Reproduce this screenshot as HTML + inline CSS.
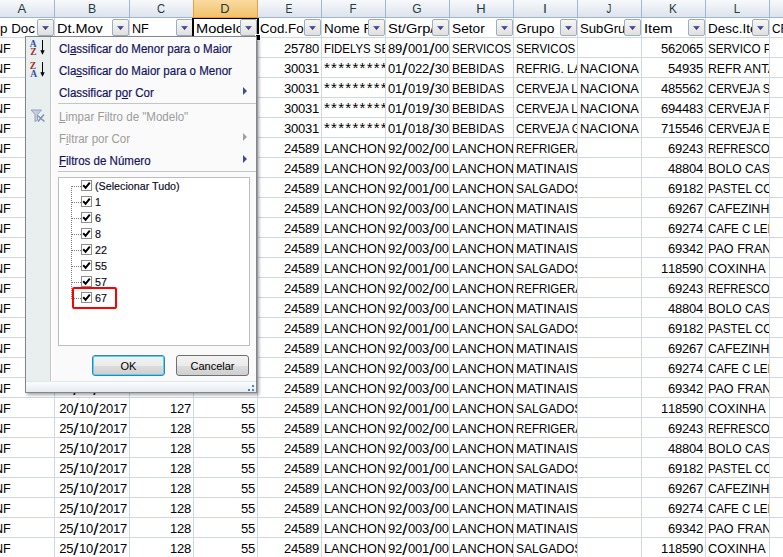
<!DOCTYPE html>
<html><head><meta charset="utf-8"><style>
*{margin:0;padding:0;box-sizing:border-box}
html,body{width:783px;height:557px;overflow:hidden;background:#fff;position:relative;font-family:"Liberation Sans",sans-serif}
.hdr{position:absolute;left:0;top:0;width:783px;height:17px;background:linear-gradient(#f7f9fc,#dde3ed)}
.hsel{position:absolute;top:0;height:17px;background:linear-gradient(#f9daa0,#f1c36a)}
.hsel-l{position:absolute;top:0;width:1px;height:17px;background:#f29b3c}
.hl{position:absolute;top:0px;width:40px;height:17px;text-align:center;font-size:13px;line-height:17px;color:#243c3c}
.hsep{position:absolute;top:0;width:1px;height:17px;background:#9fb7cf}
.hbot{position:absolute;left:0;top:17px;width:783px;height:1px;background:#9eb6ce}
.hbot-sel{position:absolute;top:17px;height:1px;background:#f29536}
.vgl{position:absolute;top:18px;width:1px;height:539px;background:#d0d7e5}
.hgl{position:absolute;left:0;width:783px;height:1px;background:#d0d7e5}
.cell{position:absolute;height:20px;overflow:hidden}
.cell span{position:absolute;top:2px;white-space:pre;font-size:13px;line-height:20px;color:#000}
.cell span.ch{text-align:center;transform-origin:50% 50%}
.cell span.ast{font-size:15px;letter-spacing:1.27px;top:1px}
.fbtn{position:absolute;top:19px;width:17px;height:17px;border:1px solid #98aecb;border-radius:2px;background:linear-gradient(#f7f6f2,#e1e0dc)}
.fbtn i{position:absolute;left:4px;top:6px;width:7px;height:4px;background:linear-gradient(#5867bd,#1f2150);clip-path:polygon(0 0,100% 0,50% 100%)}
.selbox{position:absolute;left:192px;top:18px;width:67px;height:18px;border:2px solid #000;border-top-width:1px;border-bottom-width:0}
.fillh{position:absolute;left:256px;top:35px;width:4px;height:5px;background:#000;outline:1px solid #fff}
.menu{position:absolute;left:25px;top:36px;width:232px;height:357px;border:1px solid #868686;background:#fafafa;box-shadow:2px 2px 3px rgba(0,0,0,0.35)}
.micon{position:absolute;left:0;top:0;width:24px;height:344px;background:#e9eeee}
.msep-v{position:absolute;left:24px;top:0;width:1px;height:344px;background:#c5c5c5;box-shadow:1px 0 0 #fff}
.mtxt{position:absolute;white-space:pre;font-size:12px;line-height:14px;transform:scaleX(0.96);transform-origin:0 0;-webkit-text-stroke:0.2px currentColor}
.mtxt.dis{-webkit-text-stroke:0}
.mtxt u{text-decoration:underline;text-underline-offset:1px}
.marr{position:absolute;width:0;height:0;border-top:4px solid transparent;border-bottom:4px solid transparent;border-left:4px solid #4a5a8a}
.msep{position:absolute;width:198px;height:1px;background:#c5c5c5}
.ico{position:absolute}
.lbox{position:absolute;border:1px solid #bdbdbd;background:#fff;overflow:hidden}
.cb{position:absolute;width:11px;height:11px;border:1px solid #8e8e8e;background:#fff}
.cb svg{position:absolute;left:0;top:0}
.ltxt{position:absolute;white-space:pre;font-size:11px;line-height:13px;color:#0a0a20;-webkit-text-stroke:0.15px currentColor;transform:scaleX(0.975);transform-origin:0 0}
.dh{position:absolute;width:9px;height:1px;background:repeating-linear-gradient(90deg,#808080 0 1px,transparent 1px 2px)}
.dv{position:absolute;width:1px;background:repeating-linear-gradient(180deg,#808080 0 1px,transparent 1px 2px)}
.redbox{position:absolute;width:45px;height:22px;border:2px solid #ff0000;border-radius:2px}
.btn{position:absolute;width:73px;height:21px;border:1px solid #707070;border-radius:3px;background:linear-gradient(#f2f2f2 0,#ebebeb 50%,#dddddd 51%,#cfcfcf 100%);text-align:center;font-size:11px;line-height:21px;color:#000}
.btn.ok{border-color:#3c7fb1;box-shadow:inset 0 0 0 1px #48d8fb}
.mfoot{position:absolute;left:0;width:230px;height:11px;border-top:1px solid #dde7ee;background:linear-gradient(#fdfdfe,#e3ebf2)}
.mfoot i{position:absolute;width:2px;height:2px;background:#5a7eb8}
</style></head><body>
<div class="hdr"></div>
<div class="hl" style="left:2.0px;transform:scaleX(1.008)">A</div>
<div class="hl" style="left:71.5px;transform:scaleX(0.947)">B</div>
<div class="hl" style="left:141.0px;transform:scaleX(0.857)">C</div>
<div class="hsel" style="left:193px;width:64px"></div>
<div class="hl" style="left:205.0px;transform:scaleX(0.989)">D</div>
<div class="hl" style="left:269.0px;transform:scaleX(0.792)">E</div>
<div class="hl" style="left:333.0px;transform:scaleX(0.884)">F</div>
<div class="hl" style="left:397.0px;transform:scaleX(0.926)">G</div>
<div class="hl" style="left:461.0px;transform:scaleX(1.002)">H</div>
<div class="hl" style="left:525.0px;transform:scaleX(1.087)">I</div>
<div class="hl" style="left:589.0px;transform:scaleX(0.741)">J</div>
<div class="hl" style="left:653.0px;transform:scaleX(0.906)">K</div>
<div class="hl" style="left:717.0px;transform:scaleX(0.877)">L</div>
<div class="hl" style="left:789.5px;transform:scaleX(1.192)">M</div>
<div class="hsep" style="left:54px"></div>
<div class="hsep" style="left:129px"></div>
<div class="hsep" style="left:193px"></div>
<div class="hsep" style="left:257px"></div>
<div class="hsep" style="left:321px"></div>
<div class="hsep" style="left:385px"></div>
<div class="hsep" style="left:449px"></div>
<div class="hsep" style="left:513px"></div>
<div class="hsep" style="left:577px"></div>
<div class="hsep" style="left:641px"></div>
<div class="hsep" style="left:705px"></div>
<div class="hsep" style="left:769px"></div>
<div class="hsel-l" style="left:193px"></div>
<div class="hbot"></div>
<div class="hbot-sel" style="left:193px;width:65px"></div>
<div class="hsel-l" style="left:257px"></div>
<div class="vgl" style="left:54px"></div>
<div class="vgl" style="left:129px"></div>
<div class="vgl" style="left:193px"></div>
<div class="vgl" style="left:257px"></div>
<div class="vgl" style="left:321px"></div>
<div class="vgl" style="left:385px"></div>
<div class="vgl" style="left:449px"></div>
<div class="vgl" style="left:513px"></div>
<div class="vgl" style="left:577px"></div>
<div class="vgl" style="left:641px"></div>
<div class="vgl" style="left:705px"></div>
<div class="vgl" style="left:769px"></div>
<div class="hgl" style="top:37px"></div>
<div class="hgl" style="top:57px"></div>
<div class="hgl" style="top:77px"></div>
<div class="hgl" style="top:97px"></div>
<div class="hgl" style="top:117px"></div>
<div class="hgl" style="top:137px"></div>
<div class="hgl" style="top:157px"></div>
<div class="hgl" style="top:177px"></div>
<div class="hgl" style="top:197px"></div>
<div class="hgl" style="top:217px"></div>
<div class="hgl" style="top:237px"></div>
<div class="hgl" style="top:257px"></div>
<div class="hgl" style="top:277px"></div>
<div class="hgl" style="top:297px"></div>
<div class="hgl" style="top:317px"></div>
<div class="hgl" style="top:337px"></div>
<div class="hgl" style="top:357px"></div>
<div class="hgl" style="top:377px"></div>
<div class="hgl" style="top:397px"></div>
<div class="hgl" style="top:417px"></div>
<div class="hgl" style="top:437px"></div>
<div class="hgl" style="top:457px"></div>
<div class="hgl" style="top:477px"></div>
<div class="hgl" style="top:497px"></div>
<div class="hgl" style="top:517px"></div>
<div class="hgl" style="top:537px"></div>
<div class="cell" style="left:0px;top:17px;width:37px"><span style="left:0px;transform:scaleX(1.030);transform-origin:0 0">p Doc</span></div>
<div class="cell" style="left:55px;top:17px;width:57px"><span style="left:2px;transform:scaleX(1.114);transform-origin:0 0">Dt.Mov</span></div>
<div class="cell" style="left:130px;top:17px;width:46px"><span style="left:2px;transform:scaleX(0.968);transform-origin:0 0">NF</span></div>
<div class="cell" style="left:194px;top:17px;width:46px"><span style="left:2px;transform:scaleX(1.120);transform-origin:0 0">Modelo</span></div>
<div class="cell" style="left:258px;top:17px;width:46px"><span style="left:2px;transform:scaleX(1.022);transform-origin:0 0">Cod.Forn</span></div>
<div class="cell" style="left:322px;top:17px;width:46px"><span style="left:2px;transform:scaleX(1.032);transform-origin:0 0">Nome Forn</span></div>
<div class="cell" style="left:386px;top:17px;width:46px"><span style="left:2px;transform:scaleX(1.126);transform-origin:0 0">St/Grp/SubGrp</span></div>
<div class="cell" style="left:450px;top:17px;width:46px"><span style="left:2px;transform:scaleX(1.054);transform-origin:0 0">Setor</span></div>
<div class="cell" style="left:514px;top:17px;width:46px"><span style="left:2px;transform:scaleX(1.064);transform-origin:0 0">Grupo</span></div>
<div class="cell" style="left:578px;top:17px;width:46px"><span style="left:2px;transform:scaleX(1.012);transform-origin:0 0">SubGrupo</span></div>
<div class="cell" style="left:642px;top:17px;width:46px"><span style="left:2px;transform:scaleX(1.130);transform-origin:0 0">Item</span></div>
<div class="cell" style="left:706px;top:17px;width:46px"><span style="left:2px;transform:scaleX(1.036);transform-origin:0 0">Desc.Item</span></div>
<div class="cell" style="left:770px;top:17px;width:63px"><span style="left:2px;transform:scaleX(0.910);transform-origin:0 0">CFOP</span></div>
<div class="cell" style="left:-9px;top:37px;width:63px"><span style="left:3px;transform:scaleX(0.968);transform-origin:0 0">NF</span></div>
<div class="cell" style="left:258px;top:37px;width:63px"><span class="ch" style="left:26.00px;width:7.0px;transform:scaleX(1)">2</span><span class="ch" style="left:33.00px;width:7.0px;transform:scaleX(1)">5</span><span class="ch" style="left:40.00px;width:7.0px;transform:scaleX(1)">7</span><span class="ch" style="left:47.00px;width:7.0px;transform:scaleX(1)">8</span><span class="ch" style="left:54.00px;width:7.0px;transform:scaleX(1)">0</span></div>
<div class="cell" style="left:322px;top:37px;width:63px"><span style="left:2px;transform:scaleX(0.876);transform-origin:0 0">FIDELYS SERVICOS</span></div>
<div class="cell" style="left:386px;top:37px;width:63px"><span class="ch" style="left:2.00px;width:7.0px;transform:scaleX(1)">8</span><span class="ch" style="left:9.00px;width:7.0px;transform:scaleX(1)">9</span><span class="ch" style="left:16.00px;width:5.9px;transform:translateY(0.5px) scale(1.45,1.3)">/</span><span class="ch" style="left:21.90px;width:7.0px;transform:scaleX(1)">0</span><span class="ch" style="left:28.90px;width:7.0px;transform:scaleX(1)">0</span><span class="ch" style="left:35.90px;width:7.0px;transform:scaleX(1)">1</span><span class="ch" style="left:42.90px;width:5.9px;transform:translateY(0.5px) scale(1.45,1.3)">/</span><span class="ch" style="left:48.80px;width:7.0px;transform:scaleX(1)">0</span><span class="ch" style="left:55.80px;width:7.0px;transform:scaleX(1)">0</span><span class="ch" style="left:62.80px;width:7.0px;transform:scaleX(1)">0</span><span class="ch" style="left:69.80px;width:7.0px;transform:scaleX(1)">1</span></div>
<div class="cell" style="left:450px;top:37px;width:63px"><span style="left:2px;transform:scaleX(0.885);transform-origin:0 0">SERVICOS</span></div>
<div class="cell" style="left:514px;top:37px;width:63px"><span style="left:2px;transform:scaleX(0.885);transform-origin:0 0">SERVICOS</span></div>
<div class="cell" style="left:642px;top:37px;width:63px"><span class="ch" style="left:19.00px;width:7.0px;transform:scaleX(1)">5</span><span class="ch" style="left:26.00px;width:7.0px;transform:scaleX(1)">6</span><span class="ch" style="left:33.00px;width:7.0px;transform:scaleX(1)">2</span><span class="ch" style="left:40.00px;width:7.0px;transform:scaleX(1)">0</span><span class="ch" style="left:47.00px;width:7.0px;transform:scaleX(1)">6</span><span class="ch" style="left:54.00px;width:7.0px;transform:scaleX(1)">5</span></div>
<div class="cell" style="left:706px;top:37px;width:63px"><span style="left:2px;transform:scaleX(0.901);transform-origin:0 0">SERVICO PRESTADO</span></div>
<div class="cell" style="left:-9px;top:57px;width:63px"><span style="left:3px;transform:scaleX(0.968);transform-origin:0 0">NF</span></div>
<div class="cell" style="left:258px;top:57px;width:63px"><span class="ch" style="left:26.00px;width:7.0px;transform:scaleX(1)">3</span><span class="ch" style="left:33.00px;width:7.0px;transform:scaleX(1)">0</span><span class="ch" style="left:40.00px;width:7.0px;transform:scaleX(1)">0</span><span class="ch" style="left:47.00px;width:7.0px;transform:scaleX(1)">3</span><span class="ch" style="left:54.00px;width:7.0px;transform:scaleX(1)">1</span></div>
<div class="cell" style="left:322px;top:57px;width:63px"><span class="ast" style="left:2px">**********</span></div>
<div class="cell" style="left:386px;top:57px;width:63px"><span class="ch" style="left:2.00px;width:7.0px;transform:scaleX(1)">0</span><span class="ch" style="left:9.00px;width:7.0px;transform:scaleX(1)">1</span><span class="ch" style="left:16.00px;width:5.9px;transform:translateY(0.5px) scale(1.45,1.3)">/</span><span class="ch" style="left:21.90px;width:7.0px;transform:scaleX(1)">0</span><span class="ch" style="left:28.90px;width:7.0px;transform:scaleX(1)">2</span><span class="ch" style="left:35.90px;width:7.0px;transform:scaleX(1)">2</span><span class="ch" style="left:42.90px;width:5.9px;transform:translateY(0.5px) scale(1.45,1.3)">/</span><span class="ch" style="left:48.80px;width:7.0px;transform:scaleX(1)">3</span><span class="ch" style="left:55.80px;width:7.0px;transform:scaleX(1)">0</span><span class="ch" style="left:62.80px;width:7.0px;transform:scaleX(1)">0</span><span class="ch" style="left:69.80px;width:7.0px;transform:scaleX(1)">1</span></div>
<div class="cell" style="left:450px;top:57px;width:63px"><span style="left:2px;transform:scaleX(0.926);transform-origin:0 0">BEBIDAS</span></div>
<div class="cell" style="left:514px;top:57px;width:63px"><span style="left:2px;transform:scaleX(0.907);transform-origin:0 0">REFRIG. LATA</span></div>
<div class="cell" style="left:578px;top:57px;width:63px"><span style="left:2px;transform:scaleX(0.996);transform-origin:0 0">NACIONA</span></div>
<div class="cell" style="left:642px;top:57px;width:63px"><span class="ch" style="left:26.00px;width:7.0px;transform:scaleX(1)">5</span><span class="ch" style="left:33.00px;width:7.0px;transform:scaleX(1)">4</span><span class="ch" style="left:40.00px;width:7.0px;transform:scaleX(1)">9</span><span class="ch" style="left:47.00px;width:7.0px;transform:scaleX(1)">3</span><span class="ch" style="left:54.00px;width:7.0px;transform:scaleX(1)">5</span></div>
<div class="cell" style="left:706px;top:57px;width:63px"><span style="left:2px;transform:scaleX(0.943);transform-origin:0 0">REFR ANTARCTICA</span></div>
<div class="cell" style="left:-9px;top:77px;width:63px"><span style="left:3px;transform:scaleX(0.968);transform-origin:0 0">NF</span></div>
<div class="cell" style="left:258px;top:77px;width:63px"><span class="ch" style="left:26.00px;width:7.0px;transform:scaleX(1)">3</span><span class="ch" style="left:33.00px;width:7.0px;transform:scaleX(1)">0</span><span class="ch" style="left:40.00px;width:7.0px;transform:scaleX(1)">0</span><span class="ch" style="left:47.00px;width:7.0px;transform:scaleX(1)">3</span><span class="ch" style="left:54.00px;width:7.0px;transform:scaleX(1)">1</span></div>
<div class="cell" style="left:322px;top:77px;width:63px"><span class="ast" style="left:2px">**********</span></div>
<div class="cell" style="left:386px;top:77px;width:63px"><span class="ch" style="left:2.00px;width:7.0px;transform:scaleX(1)">0</span><span class="ch" style="left:9.00px;width:7.0px;transform:scaleX(1)">1</span><span class="ch" style="left:16.00px;width:5.9px;transform:translateY(0.5px) scale(1.45,1.3)">/</span><span class="ch" style="left:21.90px;width:7.0px;transform:scaleX(1)">0</span><span class="ch" style="left:28.90px;width:7.0px;transform:scaleX(1)">1</span><span class="ch" style="left:35.90px;width:7.0px;transform:scaleX(1)">9</span><span class="ch" style="left:42.90px;width:5.9px;transform:translateY(0.5px) scale(1.45,1.3)">/</span><span class="ch" style="left:48.80px;width:7.0px;transform:scaleX(1)">3</span><span class="ch" style="left:55.80px;width:7.0px;transform:scaleX(1)">0</span><span class="ch" style="left:62.80px;width:7.0px;transform:scaleX(1)">0</span><span class="ch" style="left:69.80px;width:7.0px;transform:scaleX(1)">1</span></div>
<div class="cell" style="left:450px;top:77px;width:63px"><span style="left:2px;transform:scaleX(0.926);transform-origin:0 0">BEBIDAS</span></div>
<div class="cell" style="left:514px;top:77px;width:63px"><span style="left:2px;transform:scaleX(0.883);transform-origin:0 0">CERVEJA LATA</span></div>
<div class="cell" style="left:578px;top:77px;width:63px"><span style="left:2px;transform:scaleX(0.996);transform-origin:0 0">NACIONA</span></div>
<div class="cell" style="left:642px;top:77px;width:63px"><span class="ch" style="left:19.00px;width:7.0px;transform:scaleX(1)">4</span><span class="ch" style="left:26.00px;width:7.0px;transform:scaleX(1)">8</span><span class="ch" style="left:33.00px;width:7.0px;transform:scaleX(1)">5</span><span class="ch" style="left:40.00px;width:7.0px;transform:scaleX(1)">5</span><span class="ch" style="left:47.00px;width:7.0px;transform:scaleX(1)">6</span><span class="ch" style="left:54.00px;width:7.0px;transform:scaleX(1)">2</span></div>
<div class="cell" style="left:706px;top:77px;width:63px"><span style="left:2px;transform:scaleX(0.873);transform-origin:0 0">CERVEJA SKOL</span></div>
<div class="cell" style="left:-9px;top:97px;width:63px"><span style="left:3px;transform:scaleX(0.968);transform-origin:0 0">NF</span></div>
<div class="cell" style="left:258px;top:97px;width:63px"><span class="ch" style="left:26.00px;width:7.0px;transform:scaleX(1)">3</span><span class="ch" style="left:33.00px;width:7.0px;transform:scaleX(1)">0</span><span class="ch" style="left:40.00px;width:7.0px;transform:scaleX(1)">0</span><span class="ch" style="left:47.00px;width:7.0px;transform:scaleX(1)">3</span><span class="ch" style="left:54.00px;width:7.0px;transform:scaleX(1)">1</span></div>
<div class="cell" style="left:322px;top:97px;width:63px"><span class="ast" style="left:2px">**********</span></div>
<div class="cell" style="left:386px;top:97px;width:63px"><span class="ch" style="left:2.00px;width:7.0px;transform:scaleX(1)">0</span><span class="ch" style="left:9.00px;width:7.0px;transform:scaleX(1)">1</span><span class="ch" style="left:16.00px;width:5.9px;transform:translateY(0.5px) scale(1.45,1.3)">/</span><span class="ch" style="left:21.90px;width:7.0px;transform:scaleX(1)">0</span><span class="ch" style="left:28.90px;width:7.0px;transform:scaleX(1)">1</span><span class="ch" style="left:35.90px;width:7.0px;transform:scaleX(1)">9</span><span class="ch" style="left:42.90px;width:5.9px;transform:translateY(0.5px) scale(1.45,1.3)">/</span><span class="ch" style="left:48.80px;width:7.0px;transform:scaleX(1)">3</span><span class="ch" style="left:55.80px;width:7.0px;transform:scaleX(1)">0</span><span class="ch" style="left:62.80px;width:7.0px;transform:scaleX(1)">0</span><span class="ch" style="left:69.80px;width:7.0px;transform:scaleX(1)">1</span></div>
<div class="cell" style="left:450px;top:97px;width:63px"><span style="left:2px;transform:scaleX(0.926);transform-origin:0 0">BEBIDAS</span></div>
<div class="cell" style="left:514px;top:97px;width:63px"><span style="left:2px;transform:scaleX(0.883);transform-origin:0 0">CERVEJA LATA</span></div>
<div class="cell" style="left:578px;top:97px;width:63px"><span style="left:2px;transform:scaleX(0.996);transform-origin:0 0">NACIONA</span></div>
<div class="cell" style="left:642px;top:97px;width:63px"><span class="ch" style="left:19.00px;width:7.0px;transform:scaleX(1)">6</span><span class="ch" style="left:26.00px;width:7.0px;transform:scaleX(1)">9</span><span class="ch" style="left:33.00px;width:7.0px;transform:scaleX(1)">4</span><span class="ch" style="left:40.00px;width:7.0px;transform:scaleX(1)">4</span><span class="ch" style="left:47.00px;width:7.0px;transform:scaleX(1)">8</span><span class="ch" style="left:54.00px;width:7.0px;transform:scaleX(1)">3</span></div>
<div class="cell" style="left:706px;top:97px;width:63px"><span style="left:2px;transform:scaleX(0.884);transform-origin:0 0">CERVEJA FEST</span></div>
<div class="cell" style="left:-9px;top:117px;width:63px"><span style="left:3px;transform:scaleX(0.968);transform-origin:0 0">NF</span></div>
<div class="cell" style="left:258px;top:117px;width:63px"><span class="ch" style="left:26.00px;width:7.0px;transform:scaleX(1)">3</span><span class="ch" style="left:33.00px;width:7.0px;transform:scaleX(1)">0</span><span class="ch" style="left:40.00px;width:7.0px;transform:scaleX(1)">0</span><span class="ch" style="left:47.00px;width:7.0px;transform:scaleX(1)">3</span><span class="ch" style="left:54.00px;width:7.0px;transform:scaleX(1)">1</span></div>
<div class="cell" style="left:322px;top:117px;width:63px"><span class="ast" style="left:2px">**********</span></div>
<div class="cell" style="left:386px;top:117px;width:63px"><span class="ch" style="left:2.00px;width:7.0px;transform:scaleX(1)">0</span><span class="ch" style="left:9.00px;width:7.0px;transform:scaleX(1)">1</span><span class="ch" style="left:16.00px;width:5.9px;transform:translateY(0.5px) scale(1.45,1.3)">/</span><span class="ch" style="left:21.90px;width:7.0px;transform:scaleX(1)">0</span><span class="ch" style="left:28.90px;width:7.0px;transform:scaleX(1)">1</span><span class="ch" style="left:35.90px;width:7.0px;transform:scaleX(1)">8</span><span class="ch" style="left:42.90px;width:5.9px;transform:translateY(0.5px) scale(1.45,1.3)">/</span><span class="ch" style="left:48.80px;width:7.0px;transform:scaleX(1)">3</span><span class="ch" style="left:55.80px;width:7.0px;transform:scaleX(1)">0</span><span class="ch" style="left:62.80px;width:7.0px;transform:scaleX(1)">0</span><span class="ch" style="left:69.80px;width:7.0px;transform:scaleX(1)">1</span></div>
<div class="cell" style="left:450px;top:117px;width:63px"><span style="left:2px;transform:scaleX(0.926);transform-origin:0 0">BEBIDAS</span></div>
<div class="cell" style="left:514px;top:117px;width:63px"><span style="left:2px;transform:scaleX(0.889);transform-origin:0 0">CERVEJA GARRAFA</span></div>
<div class="cell" style="left:578px;top:117px;width:63px"><span style="left:2px;transform:scaleX(0.996);transform-origin:0 0">NACIONA</span></div>
<div class="cell" style="left:642px;top:117px;width:63px"><span class="ch" style="left:19.00px;width:7.0px;transform:scaleX(1)">7</span><span class="ch" style="left:26.00px;width:7.0px;transform:scaleX(1)">1</span><span class="ch" style="left:33.00px;width:7.0px;transform:scaleX(1)">5</span><span class="ch" style="left:40.00px;width:7.0px;transform:scaleX(1)">5</span><span class="ch" style="left:47.00px;width:7.0px;transform:scaleX(1)">4</span><span class="ch" style="left:54.00px;width:7.0px;transform:scaleX(1)">6</span></div>
<div class="cell" style="left:706px;top:117px;width:63px"><span style="left:2px;transform:scaleX(0.872);transform-origin:0 0">CERVEJA EISEN</span></div>
<div class="cell" style="left:-9px;top:137px;width:63px"><span style="left:3px;transform:scaleX(0.968);transform-origin:0 0">NF</span></div>
<div class="cell" style="left:258px;top:137px;width:63px"><span class="ch" style="left:26.00px;width:7.0px;transform:scaleX(1)">2</span><span class="ch" style="left:33.00px;width:7.0px;transform:scaleX(1)">4</span><span class="ch" style="left:40.00px;width:7.0px;transform:scaleX(1)">5</span><span class="ch" style="left:47.00px;width:7.0px;transform:scaleX(1)">8</span><span class="ch" style="left:54.00px;width:7.0px;transform:scaleX(1)">9</span></div>
<div class="cell" style="left:322px;top:137px;width:63px"><span style="left:2px;transform:scaleX(0.976);transform-origin:0 0">LANCHONETE</span></div>
<div class="cell" style="left:386px;top:137px;width:63px"><span class="ch" style="left:2.00px;width:7.0px;transform:scaleX(1)">9</span><span class="ch" style="left:9.00px;width:7.0px;transform:scaleX(1)">2</span><span class="ch" style="left:16.00px;width:5.9px;transform:translateY(0.5px) scale(1.45,1.3)">/</span><span class="ch" style="left:21.90px;width:7.0px;transform:scaleX(1)">0</span><span class="ch" style="left:28.90px;width:7.0px;transform:scaleX(1)">0</span><span class="ch" style="left:35.90px;width:7.0px;transform:scaleX(1)">2</span><span class="ch" style="left:42.90px;width:5.9px;transform:translateY(0.5px) scale(1.45,1.3)">/</span><span class="ch" style="left:48.80px;width:7.0px;transform:scaleX(1)">0</span><span class="ch" style="left:55.80px;width:7.0px;transform:scaleX(1)">0</span><span class="ch" style="left:62.80px;width:7.0px;transform:scaleX(1)">0</span><span class="ch" style="left:69.80px;width:7.0px;transform:scaleX(1)">1</span></div>
<div class="cell" style="left:450px;top:137px;width:63px"><span style="left:2px;transform:scaleX(0.976);transform-origin:0 0">LANCHONETE</span></div>
<div class="cell" style="left:514px;top:137px;width:63px"><span style="left:2px;transform:scaleX(0.881);transform-origin:0 0">REFRIGERANTES</span></div>
<div class="cell" style="left:642px;top:137px;width:63px"><span class="ch" style="left:26.00px;width:7.0px;transform:scaleX(1)">6</span><span class="ch" style="left:33.00px;width:7.0px;transform:scaleX(1)">9</span><span class="ch" style="left:40.00px;width:7.0px;transform:scaleX(1)">2</span><span class="ch" style="left:47.00px;width:7.0px;transform:scaleX(1)">4</span><span class="ch" style="left:54.00px;width:7.0px;transform:scaleX(1)">3</span></div>
<div class="cell" style="left:706px;top:137px;width:63px"><span style="left:2px;transform:scaleX(0.855);transform-origin:0 0">REFRESCO</span></div>
<div class="cell" style="left:-9px;top:157px;width:63px"><span style="left:3px;transform:scaleX(0.968);transform-origin:0 0">NF</span></div>
<div class="cell" style="left:258px;top:157px;width:63px"><span class="ch" style="left:26.00px;width:7.0px;transform:scaleX(1)">2</span><span class="ch" style="left:33.00px;width:7.0px;transform:scaleX(1)">4</span><span class="ch" style="left:40.00px;width:7.0px;transform:scaleX(1)">5</span><span class="ch" style="left:47.00px;width:7.0px;transform:scaleX(1)">8</span><span class="ch" style="left:54.00px;width:7.0px;transform:scaleX(1)">9</span></div>
<div class="cell" style="left:322px;top:157px;width:63px"><span style="left:2px;transform:scaleX(0.976);transform-origin:0 0">LANCHONETE</span></div>
<div class="cell" style="left:386px;top:157px;width:63px"><span class="ch" style="left:2.00px;width:7.0px;transform:scaleX(1)">9</span><span class="ch" style="left:9.00px;width:7.0px;transform:scaleX(1)">2</span><span class="ch" style="left:16.00px;width:5.9px;transform:translateY(0.5px) scale(1.45,1.3)">/</span><span class="ch" style="left:21.90px;width:7.0px;transform:scaleX(1)">0</span><span class="ch" style="left:28.90px;width:7.0px;transform:scaleX(1)">0</span><span class="ch" style="left:35.90px;width:7.0px;transform:scaleX(1)">3</span><span class="ch" style="left:42.90px;width:5.9px;transform:translateY(0.5px) scale(1.45,1.3)">/</span><span class="ch" style="left:48.80px;width:7.0px;transform:scaleX(1)">0</span><span class="ch" style="left:55.80px;width:7.0px;transform:scaleX(1)">0</span><span class="ch" style="left:62.80px;width:7.0px;transform:scaleX(1)">0</span><span class="ch" style="left:69.80px;width:7.0px;transform:scaleX(1)">1</span></div>
<div class="cell" style="left:450px;top:157px;width:63px"><span style="left:2px;transform:scaleX(0.976);transform-origin:0 0">LANCHONETE</span></div>
<div class="cell" style="left:514px;top:157px;width:63px"><span style="left:2px;transform:scaleX(1.031);transform-origin:0 0">MATINAIS</span></div>
<div class="cell" style="left:642px;top:157px;width:63px"><span class="ch" style="left:26.00px;width:7.0px;transform:scaleX(1)">4</span><span class="ch" style="left:33.00px;width:7.0px;transform:scaleX(1)">8</span><span class="ch" style="left:40.00px;width:7.0px;transform:scaleX(1)">8</span><span class="ch" style="left:47.00px;width:7.0px;transform:scaleX(1)">0</span><span class="ch" style="left:54.00px;width:7.0px;transform:scaleX(1)">4</span></div>
<div class="cell" style="left:706px;top:157px;width:63px"><span style="left:2px;transform:scaleX(0.928);transform-origin:0 0">BOLO CASEIRO</span></div>
<div class="cell" style="left:-9px;top:177px;width:63px"><span style="left:3px;transform:scaleX(0.968);transform-origin:0 0">NF</span></div>
<div class="cell" style="left:258px;top:177px;width:63px"><span class="ch" style="left:26.00px;width:7.0px;transform:scaleX(1)">2</span><span class="ch" style="left:33.00px;width:7.0px;transform:scaleX(1)">4</span><span class="ch" style="left:40.00px;width:7.0px;transform:scaleX(1)">5</span><span class="ch" style="left:47.00px;width:7.0px;transform:scaleX(1)">8</span><span class="ch" style="left:54.00px;width:7.0px;transform:scaleX(1)">9</span></div>
<div class="cell" style="left:322px;top:177px;width:63px"><span style="left:2px;transform:scaleX(0.976);transform-origin:0 0">LANCHONETE</span></div>
<div class="cell" style="left:386px;top:177px;width:63px"><span class="ch" style="left:2.00px;width:7.0px;transform:scaleX(1)">9</span><span class="ch" style="left:9.00px;width:7.0px;transform:scaleX(1)">2</span><span class="ch" style="left:16.00px;width:5.9px;transform:translateY(0.5px) scale(1.45,1.3)">/</span><span class="ch" style="left:21.90px;width:7.0px;transform:scaleX(1)">0</span><span class="ch" style="left:28.90px;width:7.0px;transform:scaleX(1)">0</span><span class="ch" style="left:35.90px;width:7.0px;transform:scaleX(1)">1</span><span class="ch" style="left:42.90px;width:5.9px;transform:translateY(0.5px) scale(1.45,1.3)">/</span><span class="ch" style="left:48.80px;width:7.0px;transform:scaleX(1)">0</span><span class="ch" style="left:55.80px;width:7.0px;transform:scaleX(1)">0</span><span class="ch" style="left:62.80px;width:7.0px;transform:scaleX(1)">0</span><span class="ch" style="left:69.80px;width:7.0px;transform:scaleX(1)">1</span></div>
<div class="cell" style="left:450px;top:177px;width:63px"><span style="left:2px;transform:scaleX(0.976);transform-origin:0 0">LANCHONETE</span></div>
<div class="cell" style="left:514px;top:177px;width:63px"><span style="left:2px;transform:scaleX(0.927);transform-origin:0 0">SALGADOS</span></div>
<div class="cell" style="left:642px;top:177px;width:63px"><span class="ch" style="left:26.00px;width:7.0px;transform:scaleX(1)">6</span><span class="ch" style="left:33.00px;width:7.0px;transform:scaleX(1)">9</span><span class="ch" style="left:40.00px;width:7.0px;transform:scaleX(1)">1</span><span class="ch" style="left:47.00px;width:7.0px;transform:scaleX(1)">8</span><span class="ch" style="left:54.00px;width:7.0px;transform:scaleX(1)">2</span></div>
<div class="cell" style="left:706px;top:177px;width:63px"><span style="left:2px;transform:scaleX(0.898);transform-origin:0 0">PASTEL CC</span></div>
<div class="cell" style="left:-9px;top:197px;width:63px"><span style="left:3px;transform:scaleX(0.968);transform-origin:0 0">NF</span></div>
<div class="cell" style="left:258px;top:197px;width:63px"><span class="ch" style="left:26.00px;width:7.0px;transform:scaleX(1)">2</span><span class="ch" style="left:33.00px;width:7.0px;transform:scaleX(1)">4</span><span class="ch" style="left:40.00px;width:7.0px;transform:scaleX(1)">5</span><span class="ch" style="left:47.00px;width:7.0px;transform:scaleX(1)">8</span><span class="ch" style="left:54.00px;width:7.0px;transform:scaleX(1)">9</span></div>
<div class="cell" style="left:322px;top:197px;width:63px"><span style="left:2px;transform:scaleX(0.976);transform-origin:0 0">LANCHONETE</span></div>
<div class="cell" style="left:386px;top:197px;width:63px"><span class="ch" style="left:2.00px;width:7.0px;transform:scaleX(1)">9</span><span class="ch" style="left:9.00px;width:7.0px;transform:scaleX(1)">2</span><span class="ch" style="left:16.00px;width:5.9px;transform:translateY(0.5px) scale(1.45,1.3)">/</span><span class="ch" style="left:21.90px;width:7.0px;transform:scaleX(1)">0</span><span class="ch" style="left:28.90px;width:7.0px;transform:scaleX(1)">0</span><span class="ch" style="left:35.90px;width:7.0px;transform:scaleX(1)">3</span><span class="ch" style="left:42.90px;width:5.9px;transform:translateY(0.5px) scale(1.45,1.3)">/</span><span class="ch" style="left:48.80px;width:7.0px;transform:scaleX(1)">0</span><span class="ch" style="left:55.80px;width:7.0px;transform:scaleX(1)">0</span><span class="ch" style="left:62.80px;width:7.0px;transform:scaleX(1)">0</span><span class="ch" style="left:69.80px;width:7.0px;transform:scaleX(1)">1</span></div>
<div class="cell" style="left:450px;top:197px;width:63px"><span style="left:2px;transform:scaleX(0.976);transform-origin:0 0">LANCHONETE</span></div>
<div class="cell" style="left:514px;top:197px;width:63px"><span style="left:2px;transform:scaleX(1.031);transform-origin:0 0">MATINAIS</span></div>
<div class="cell" style="left:642px;top:197px;width:63px"><span class="ch" style="left:26.00px;width:7.0px;transform:scaleX(1)">6</span><span class="ch" style="left:33.00px;width:7.0px;transform:scaleX(1)">9</span><span class="ch" style="left:40.00px;width:7.0px;transform:scaleX(1)">2</span><span class="ch" style="left:47.00px;width:7.0px;transform:scaleX(1)">6</span><span class="ch" style="left:54.00px;width:7.0px;transform:scaleX(1)">7</span></div>
<div class="cell" style="left:706px;top:197px;width:63px"><span style="left:2px;transform:scaleX(0.943);transform-origin:0 0">CAFEZINHO</span></div>
<div class="cell" style="left:-9px;top:217px;width:63px"><span style="left:3px;transform:scaleX(0.968);transform-origin:0 0">NF</span></div>
<div class="cell" style="left:258px;top:217px;width:63px"><span class="ch" style="left:26.00px;width:7.0px;transform:scaleX(1)">2</span><span class="ch" style="left:33.00px;width:7.0px;transform:scaleX(1)">4</span><span class="ch" style="left:40.00px;width:7.0px;transform:scaleX(1)">5</span><span class="ch" style="left:47.00px;width:7.0px;transform:scaleX(1)">8</span><span class="ch" style="left:54.00px;width:7.0px;transform:scaleX(1)">9</span></div>
<div class="cell" style="left:322px;top:217px;width:63px"><span style="left:2px;transform:scaleX(0.976);transform-origin:0 0">LANCHONETE</span></div>
<div class="cell" style="left:386px;top:217px;width:63px"><span class="ch" style="left:2.00px;width:7.0px;transform:scaleX(1)">9</span><span class="ch" style="left:9.00px;width:7.0px;transform:scaleX(1)">2</span><span class="ch" style="left:16.00px;width:5.9px;transform:translateY(0.5px) scale(1.45,1.3)">/</span><span class="ch" style="left:21.90px;width:7.0px;transform:scaleX(1)">0</span><span class="ch" style="left:28.90px;width:7.0px;transform:scaleX(1)">0</span><span class="ch" style="left:35.90px;width:7.0px;transform:scaleX(1)">3</span><span class="ch" style="left:42.90px;width:5.9px;transform:translateY(0.5px) scale(1.45,1.3)">/</span><span class="ch" style="left:48.80px;width:7.0px;transform:scaleX(1)">0</span><span class="ch" style="left:55.80px;width:7.0px;transform:scaleX(1)">0</span><span class="ch" style="left:62.80px;width:7.0px;transform:scaleX(1)">0</span><span class="ch" style="left:69.80px;width:7.0px;transform:scaleX(1)">1</span></div>
<div class="cell" style="left:450px;top:217px;width:63px"><span style="left:2px;transform:scaleX(0.976);transform-origin:0 0">LANCHONETE</span></div>
<div class="cell" style="left:514px;top:217px;width:63px"><span style="left:2px;transform:scaleX(1.031);transform-origin:0 0">MATINAIS</span></div>
<div class="cell" style="left:642px;top:217px;width:63px"><span class="ch" style="left:26.00px;width:7.0px;transform:scaleX(1)">6</span><span class="ch" style="left:33.00px;width:7.0px;transform:scaleX(1)">9</span><span class="ch" style="left:40.00px;width:7.0px;transform:scaleX(1)">2</span><span class="ch" style="left:47.00px;width:7.0px;transform:scaleX(1)">7</span><span class="ch" style="left:54.00px;width:7.0px;transform:scaleX(1)">4</span></div>
<div class="cell" style="left:706px;top:217px;width:63px"><span style="left:2px;transform:scaleX(0.886);transform-origin:0 0">CAFE C LEITE</span></div>
<div class="cell" style="left:-9px;top:237px;width:63px"><span style="left:3px;transform:scaleX(0.968);transform-origin:0 0">NF</span></div>
<div class="cell" style="left:258px;top:237px;width:63px"><span class="ch" style="left:26.00px;width:7.0px;transform:scaleX(1)">2</span><span class="ch" style="left:33.00px;width:7.0px;transform:scaleX(1)">4</span><span class="ch" style="left:40.00px;width:7.0px;transform:scaleX(1)">5</span><span class="ch" style="left:47.00px;width:7.0px;transform:scaleX(1)">8</span><span class="ch" style="left:54.00px;width:7.0px;transform:scaleX(1)">9</span></div>
<div class="cell" style="left:322px;top:237px;width:63px"><span style="left:2px;transform:scaleX(0.976);transform-origin:0 0">LANCHONETE</span></div>
<div class="cell" style="left:386px;top:237px;width:63px"><span class="ch" style="left:2.00px;width:7.0px;transform:scaleX(1)">9</span><span class="ch" style="left:9.00px;width:7.0px;transform:scaleX(1)">2</span><span class="ch" style="left:16.00px;width:5.9px;transform:translateY(0.5px) scale(1.45,1.3)">/</span><span class="ch" style="left:21.90px;width:7.0px;transform:scaleX(1)">0</span><span class="ch" style="left:28.90px;width:7.0px;transform:scaleX(1)">0</span><span class="ch" style="left:35.90px;width:7.0px;transform:scaleX(1)">3</span><span class="ch" style="left:42.90px;width:5.9px;transform:translateY(0.5px) scale(1.45,1.3)">/</span><span class="ch" style="left:48.80px;width:7.0px;transform:scaleX(1)">0</span><span class="ch" style="left:55.80px;width:7.0px;transform:scaleX(1)">0</span><span class="ch" style="left:62.80px;width:7.0px;transform:scaleX(1)">0</span><span class="ch" style="left:69.80px;width:7.0px;transform:scaleX(1)">1</span></div>
<div class="cell" style="left:450px;top:237px;width:63px"><span style="left:2px;transform:scaleX(0.976);transform-origin:0 0">LANCHONETE</span></div>
<div class="cell" style="left:514px;top:237px;width:63px"><span style="left:2px;transform:scaleX(1.031);transform-origin:0 0">MATINAIS</span></div>
<div class="cell" style="left:642px;top:237px;width:63px"><span class="ch" style="left:26.00px;width:7.0px;transform:scaleX(1)">6</span><span class="ch" style="left:33.00px;width:7.0px;transform:scaleX(1)">9</span><span class="ch" style="left:40.00px;width:7.0px;transform:scaleX(1)">3</span><span class="ch" style="left:47.00px;width:7.0px;transform:scaleX(1)">4</span><span class="ch" style="left:54.00px;width:7.0px;transform:scaleX(1)">2</span></div>
<div class="cell" style="left:706px;top:237px;width:63px"><span style="left:2px;transform:scaleX(0.969);transform-origin:0 0">PAO FRANCES</span></div>
<div class="cell" style="left:-9px;top:257px;width:63px"><span style="left:3px;transform:scaleX(0.968);transform-origin:0 0">NF</span></div>
<div class="cell" style="left:258px;top:257px;width:63px"><span class="ch" style="left:26.00px;width:7.0px;transform:scaleX(1)">2</span><span class="ch" style="left:33.00px;width:7.0px;transform:scaleX(1)">4</span><span class="ch" style="left:40.00px;width:7.0px;transform:scaleX(1)">5</span><span class="ch" style="left:47.00px;width:7.0px;transform:scaleX(1)">8</span><span class="ch" style="left:54.00px;width:7.0px;transform:scaleX(1)">9</span></div>
<div class="cell" style="left:322px;top:257px;width:63px"><span style="left:2px;transform:scaleX(0.976);transform-origin:0 0">LANCHONETE</span></div>
<div class="cell" style="left:386px;top:257px;width:63px"><span class="ch" style="left:2.00px;width:7.0px;transform:scaleX(1)">9</span><span class="ch" style="left:9.00px;width:7.0px;transform:scaleX(1)">2</span><span class="ch" style="left:16.00px;width:5.9px;transform:translateY(0.5px) scale(1.45,1.3)">/</span><span class="ch" style="left:21.90px;width:7.0px;transform:scaleX(1)">0</span><span class="ch" style="left:28.90px;width:7.0px;transform:scaleX(1)">0</span><span class="ch" style="left:35.90px;width:7.0px;transform:scaleX(1)">1</span><span class="ch" style="left:42.90px;width:5.9px;transform:translateY(0.5px) scale(1.45,1.3)">/</span><span class="ch" style="left:48.80px;width:7.0px;transform:scaleX(1)">0</span><span class="ch" style="left:55.80px;width:7.0px;transform:scaleX(1)">0</span><span class="ch" style="left:62.80px;width:7.0px;transform:scaleX(1)">0</span><span class="ch" style="left:69.80px;width:7.0px;transform:scaleX(1)">1</span></div>
<div class="cell" style="left:450px;top:257px;width:63px"><span style="left:2px;transform:scaleX(0.976);transform-origin:0 0">LANCHONETE</span></div>
<div class="cell" style="left:514px;top:257px;width:63px"><span style="left:2px;transform:scaleX(0.927);transform-origin:0 0">SALGADOS</span></div>
<div class="cell" style="left:642px;top:257px;width:63px"><span class="ch" style="left:19.00px;width:7.0px;transform:scaleX(1)">1</span><span class="ch" style="left:26.00px;width:7.0px;transform:scaleX(1)">1</span><span class="ch" style="left:33.00px;width:7.0px;transform:scaleX(1)">8</span><span class="ch" style="left:40.00px;width:7.0px;transform:scaleX(1)">5</span><span class="ch" style="left:47.00px;width:7.0px;transform:scaleX(1)">9</span><span class="ch" style="left:54.00px;width:7.0px;transform:scaleX(1)">0</span></div>
<div class="cell" style="left:706px;top:257px;width:63px"><span style="left:2px;transform:scaleX(0.974);transform-origin:0 0">COXINHA</span></div>
<div class="cell" style="left:-9px;top:277px;width:63px"><span style="left:3px;transform:scaleX(0.968);transform-origin:0 0">NF</span></div>
<div class="cell" style="left:258px;top:277px;width:63px"><span class="ch" style="left:26.00px;width:7.0px;transform:scaleX(1)">2</span><span class="ch" style="left:33.00px;width:7.0px;transform:scaleX(1)">4</span><span class="ch" style="left:40.00px;width:7.0px;transform:scaleX(1)">5</span><span class="ch" style="left:47.00px;width:7.0px;transform:scaleX(1)">8</span><span class="ch" style="left:54.00px;width:7.0px;transform:scaleX(1)">9</span></div>
<div class="cell" style="left:322px;top:277px;width:63px"><span style="left:2px;transform:scaleX(0.976);transform-origin:0 0">LANCHONETE</span></div>
<div class="cell" style="left:386px;top:277px;width:63px"><span class="ch" style="left:2.00px;width:7.0px;transform:scaleX(1)">9</span><span class="ch" style="left:9.00px;width:7.0px;transform:scaleX(1)">2</span><span class="ch" style="left:16.00px;width:5.9px;transform:translateY(0.5px) scale(1.45,1.3)">/</span><span class="ch" style="left:21.90px;width:7.0px;transform:scaleX(1)">0</span><span class="ch" style="left:28.90px;width:7.0px;transform:scaleX(1)">0</span><span class="ch" style="left:35.90px;width:7.0px;transform:scaleX(1)">2</span><span class="ch" style="left:42.90px;width:5.9px;transform:translateY(0.5px) scale(1.45,1.3)">/</span><span class="ch" style="left:48.80px;width:7.0px;transform:scaleX(1)">0</span><span class="ch" style="left:55.80px;width:7.0px;transform:scaleX(1)">0</span><span class="ch" style="left:62.80px;width:7.0px;transform:scaleX(1)">0</span><span class="ch" style="left:69.80px;width:7.0px;transform:scaleX(1)">1</span></div>
<div class="cell" style="left:450px;top:277px;width:63px"><span style="left:2px;transform:scaleX(0.976);transform-origin:0 0">LANCHONETE</span></div>
<div class="cell" style="left:514px;top:277px;width:63px"><span style="left:2px;transform:scaleX(0.881);transform-origin:0 0">REFRIGERANTES</span></div>
<div class="cell" style="left:642px;top:277px;width:63px"><span class="ch" style="left:26.00px;width:7.0px;transform:scaleX(1)">6</span><span class="ch" style="left:33.00px;width:7.0px;transform:scaleX(1)">9</span><span class="ch" style="left:40.00px;width:7.0px;transform:scaleX(1)">2</span><span class="ch" style="left:47.00px;width:7.0px;transform:scaleX(1)">4</span><span class="ch" style="left:54.00px;width:7.0px;transform:scaleX(1)">3</span></div>
<div class="cell" style="left:706px;top:277px;width:63px"><span style="left:2px;transform:scaleX(0.855);transform-origin:0 0">REFRESCO</span></div>
<div class="cell" style="left:-9px;top:297px;width:63px"><span style="left:3px;transform:scaleX(0.968);transform-origin:0 0">NF</span></div>
<div class="cell" style="left:258px;top:297px;width:63px"><span class="ch" style="left:26.00px;width:7.0px;transform:scaleX(1)">2</span><span class="ch" style="left:33.00px;width:7.0px;transform:scaleX(1)">4</span><span class="ch" style="left:40.00px;width:7.0px;transform:scaleX(1)">5</span><span class="ch" style="left:47.00px;width:7.0px;transform:scaleX(1)">8</span><span class="ch" style="left:54.00px;width:7.0px;transform:scaleX(1)">9</span></div>
<div class="cell" style="left:322px;top:297px;width:63px"><span style="left:2px;transform:scaleX(0.976);transform-origin:0 0">LANCHONETE</span></div>
<div class="cell" style="left:386px;top:297px;width:63px"><span class="ch" style="left:2.00px;width:7.0px;transform:scaleX(1)">9</span><span class="ch" style="left:9.00px;width:7.0px;transform:scaleX(1)">2</span><span class="ch" style="left:16.00px;width:5.9px;transform:translateY(0.5px) scale(1.45,1.3)">/</span><span class="ch" style="left:21.90px;width:7.0px;transform:scaleX(1)">0</span><span class="ch" style="left:28.90px;width:7.0px;transform:scaleX(1)">0</span><span class="ch" style="left:35.90px;width:7.0px;transform:scaleX(1)">3</span><span class="ch" style="left:42.90px;width:5.9px;transform:translateY(0.5px) scale(1.45,1.3)">/</span><span class="ch" style="left:48.80px;width:7.0px;transform:scaleX(1)">0</span><span class="ch" style="left:55.80px;width:7.0px;transform:scaleX(1)">0</span><span class="ch" style="left:62.80px;width:7.0px;transform:scaleX(1)">0</span><span class="ch" style="left:69.80px;width:7.0px;transform:scaleX(1)">1</span></div>
<div class="cell" style="left:450px;top:297px;width:63px"><span style="left:2px;transform:scaleX(0.976);transform-origin:0 0">LANCHONETE</span></div>
<div class="cell" style="left:514px;top:297px;width:63px"><span style="left:2px;transform:scaleX(1.031);transform-origin:0 0">MATINAIS</span></div>
<div class="cell" style="left:642px;top:297px;width:63px"><span class="ch" style="left:26.00px;width:7.0px;transform:scaleX(1)">4</span><span class="ch" style="left:33.00px;width:7.0px;transform:scaleX(1)">8</span><span class="ch" style="left:40.00px;width:7.0px;transform:scaleX(1)">8</span><span class="ch" style="left:47.00px;width:7.0px;transform:scaleX(1)">0</span><span class="ch" style="left:54.00px;width:7.0px;transform:scaleX(1)">4</span></div>
<div class="cell" style="left:706px;top:297px;width:63px"><span style="left:2px;transform:scaleX(0.928);transform-origin:0 0">BOLO CASEIRO</span></div>
<div class="cell" style="left:-9px;top:317px;width:63px"><span style="left:3px;transform:scaleX(0.968);transform-origin:0 0">NF</span></div>
<div class="cell" style="left:258px;top:317px;width:63px"><span class="ch" style="left:26.00px;width:7.0px;transform:scaleX(1)">2</span><span class="ch" style="left:33.00px;width:7.0px;transform:scaleX(1)">4</span><span class="ch" style="left:40.00px;width:7.0px;transform:scaleX(1)">5</span><span class="ch" style="left:47.00px;width:7.0px;transform:scaleX(1)">8</span><span class="ch" style="left:54.00px;width:7.0px;transform:scaleX(1)">9</span></div>
<div class="cell" style="left:322px;top:317px;width:63px"><span style="left:2px;transform:scaleX(0.976);transform-origin:0 0">LANCHONETE</span></div>
<div class="cell" style="left:386px;top:317px;width:63px"><span class="ch" style="left:2.00px;width:7.0px;transform:scaleX(1)">9</span><span class="ch" style="left:9.00px;width:7.0px;transform:scaleX(1)">2</span><span class="ch" style="left:16.00px;width:5.9px;transform:translateY(0.5px) scale(1.45,1.3)">/</span><span class="ch" style="left:21.90px;width:7.0px;transform:scaleX(1)">0</span><span class="ch" style="left:28.90px;width:7.0px;transform:scaleX(1)">0</span><span class="ch" style="left:35.90px;width:7.0px;transform:scaleX(1)">1</span><span class="ch" style="left:42.90px;width:5.9px;transform:translateY(0.5px) scale(1.45,1.3)">/</span><span class="ch" style="left:48.80px;width:7.0px;transform:scaleX(1)">0</span><span class="ch" style="left:55.80px;width:7.0px;transform:scaleX(1)">0</span><span class="ch" style="left:62.80px;width:7.0px;transform:scaleX(1)">0</span><span class="ch" style="left:69.80px;width:7.0px;transform:scaleX(1)">1</span></div>
<div class="cell" style="left:450px;top:317px;width:63px"><span style="left:2px;transform:scaleX(0.976);transform-origin:0 0">LANCHONETE</span></div>
<div class="cell" style="left:514px;top:317px;width:63px"><span style="left:2px;transform:scaleX(0.927);transform-origin:0 0">SALGADOS</span></div>
<div class="cell" style="left:642px;top:317px;width:63px"><span class="ch" style="left:26.00px;width:7.0px;transform:scaleX(1)">6</span><span class="ch" style="left:33.00px;width:7.0px;transform:scaleX(1)">9</span><span class="ch" style="left:40.00px;width:7.0px;transform:scaleX(1)">1</span><span class="ch" style="left:47.00px;width:7.0px;transform:scaleX(1)">8</span><span class="ch" style="left:54.00px;width:7.0px;transform:scaleX(1)">2</span></div>
<div class="cell" style="left:706px;top:317px;width:63px"><span style="left:2px;transform:scaleX(0.898);transform-origin:0 0">PASTEL CC</span></div>
<div class="cell" style="left:-9px;top:337px;width:63px"><span style="left:3px;transform:scaleX(0.968);transform-origin:0 0">NF</span></div>
<div class="cell" style="left:258px;top:337px;width:63px"><span class="ch" style="left:26.00px;width:7.0px;transform:scaleX(1)">2</span><span class="ch" style="left:33.00px;width:7.0px;transform:scaleX(1)">4</span><span class="ch" style="left:40.00px;width:7.0px;transform:scaleX(1)">5</span><span class="ch" style="left:47.00px;width:7.0px;transform:scaleX(1)">8</span><span class="ch" style="left:54.00px;width:7.0px;transform:scaleX(1)">9</span></div>
<div class="cell" style="left:322px;top:337px;width:63px"><span style="left:2px;transform:scaleX(0.976);transform-origin:0 0">LANCHONETE</span></div>
<div class="cell" style="left:386px;top:337px;width:63px"><span class="ch" style="left:2.00px;width:7.0px;transform:scaleX(1)">9</span><span class="ch" style="left:9.00px;width:7.0px;transform:scaleX(1)">2</span><span class="ch" style="left:16.00px;width:5.9px;transform:translateY(0.5px) scale(1.45,1.3)">/</span><span class="ch" style="left:21.90px;width:7.0px;transform:scaleX(1)">0</span><span class="ch" style="left:28.90px;width:7.0px;transform:scaleX(1)">0</span><span class="ch" style="left:35.90px;width:7.0px;transform:scaleX(1)">3</span><span class="ch" style="left:42.90px;width:5.9px;transform:translateY(0.5px) scale(1.45,1.3)">/</span><span class="ch" style="left:48.80px;width:7.0px;transform:scaleX(1)">0</span><span class="ch" style="left:55.80px;width:7.0px;transform:scaleX(1)">0</span><span class="ch" style="left:62.80px;width:7.0px;transform:scaleX(1)">0</span><span class="ch" style="left:69.80px;width:7.0px;transform:scaleX(1)">1</span></div>
<div class="cell" style="left:450px;top:337px;width:63px"><span style="left:2px;transform:scaleX(0.976);transform-origin:0 0">LANCHONETE</span></div>
<div class="cell" style="left:514px;top:337px;width:63px"><span style="left:2px;transform:scaleX(1.031);transform-origin:0 0">MATINAIS</span></div>
<div class="cell" style="left:642px;top:337px;width:63px"><span class="ch" style="left:26.00px;width:7.0px;transform:scaleX(1)">6</span><span class="ch" style="left:33.00px;width:7.0px;transform:scaleX(1)">9</span><span class="ch" style="left:40.00px;width:7.0px;transform:scaleX(1)">2</span><span class="ch" style="left:47.00px;width:7.0px;transform:scaleX(1)">6</span><span class="ch" style="left:54.00px;width:7.0px;transform:scaleX(1)">7</span></div>
<div class="cell" style="left:706px;top:337px;width:63px"><span style="left:2px;transform:scaleX(0.943);transform-origin:0 0">CAFEZINHO</span></div>
<div class="cell" style="left:-9px;top:357px;width:63px"><span style="left:3px;transform:scaleX(0.968);transform-origin:0 0">NF</span></div>
<div class="cell" style="left:258px;top:357px;width:63px"><span class="ch" style="left:26.00px;width:7.0px;transform:scaleX(1)">2</span><span class="ch" style="left:33.00px;width:7.0px;transform:scaleX(1)">4</span><span class="ch" style="left:40.00px;width:7.0px;transform:scaleX(1)">5</span><span class="ch" style="left:47.00px;width:7.0px;transform:scaleX(1)">8</span><span class="ch" style="left:54.00px;width:7.0px;transform:scaleX(1)">9</span></div>
<div class="cell" style="left:322px;top:357px;width:63px"><span style="left:2px;transform:scaleX(0.976);transform-origin:0 0">LANCHONETE</span></div>
<div class="cell" style="left:386px;top:357px;width:63px"><span class="ch" style="left:2.00px;width:7.0px;transform:scaleX(1)">9</span><span class="ch" style="left:9.00px;width:7.0px;transform:scaleX(1)">2</span><span class="ch" style="left:16.00px;width:5.9px;transform:translateY(0.5px) scale(1.45,1.3)">/</span><span class="ch" style="left:21.90px;width:7.0px;transform:scaleX(1)">0</span><span class="ch" style="left:28.90px;width:7.0px;transform:scaleX(1)">0</span><span class="ch" style="left:35.90px;width:7.0px;transform:scaleX(1)">3</span><span class="ch" style="left:42.90px;width:5.9px;transform:translateY(0.5px) scale(1.45,1.3)">/</span><span class="ch" style="left:48.80px;width:7.0px;transform:scaleX(1)">0</span><span class="ch" style="left:55.80px;width:7.0px;transform:scaleX(1)">0</span><span class="ch" style="left:62.80px;width:7.0px;transform:scaleX(1)">0</span><span class="ch" style="left:69.80px;width:7.0px;transform:scaleX(1)">1</span></div>
<div class="cell" style="left:450px;top:357px;width:63px"><span style="left:2px;transform:scaleX(0.976);transform-origin:0 0">LANCHONETE</span></div>
<div class="cell" style="left:514px;top:357px;width:63px"><span style="left:2px;transform:scaleX(1.031);transform-origin:0 0">MATINAIS</span></div>
<div class="cell" style="left:642px;top:357px;width:63px"><span class="ch" style="left:26.00px;width:7.0px;transform:scaleX(1)">6</span><span class="ch" style="left:33.00px;width:7.0px;transform:scaleX(1)">9</span><span class="ch" style="left:40.00px;width:7.0px;transform:scaleX(1)">2</span><span class="ch" style="left:47.00px;width:7.0px;transform:scaleX(1)">7</span><span class="ch" style="left:54.00px;width:7.0px;transform:scaleX(1)">4</span></div>
<div class="cell" style="left:706px;top:357px;width:63px"><span style="left:2px;transform:scaleX(0.886);transform-origin:0 0">CAFE C LEITE</span></div>
<div class="cell" style="left:-9px;top:377px;width:63px"><span style="left:3px;transform:scaleX(0.968);transform-origin:0 0">NF</span></div>
<div class="cell" style="left:55px;top:377px;width:74px"><span class="ch" style="left:4.20px;width:7.0px;transform:scaleX(1)">2</span><span class="ch" style="left:11.20px;width:7.0px;transform:scaleX(1)">0</span><span class="ch" style="left:18.20px;width:5.9px;transform:translateY(0.5px) scale(1.45,1.3)">/</span><span class="ch" style="left:24.10px;width:7.0px;transform:scaleX(1)">1</span><span class="ch" style="left:31.10px;width:7.0px;transform:scaleX(1)">0</span><span class="ch" style="left:38.10px;width:5.9px;transform:translateY(0.5px) scale(1.45,1.3)">/</span><span class="ch" style="left:44.00px;width:7.0px;transform:scaleX(1)">2</span><span class="ch" style="left:51.00px;width:7.0px;transform:scaleX(1)">0</span><span class="ch" style="left:58.00px;width:7.0px;transform:scaleX(1)">1</span><span class="ch" style="left:65.00px;width:7.0px;transform:scaleX(1)">7</span></div>
<div class="cell" style="left:130px;top:377px;width:63px"><span class="ch" style="left:40.00px;width:7.0px;transform:scaleX(1)">1</span><span class="ch" style="left:47.00px;width:7.0px;transform:scaleX(1)">2</span><span class="ch" style="left:54.00px;width:7.0px;transform:scaleX(1)">7</span></div>
<div class="cell" style="left:194px;top:377px;width:63px"><span class="ch" style="left:47.00px;width:7.0px;transform:scaleX(1)">5</span><span class="ch" style="left:54.00px;width:7.0px;transform:scaleX(1)">5</span></div>
<div class="cell" style="left:258px;top:377px;width:63px"><span class="ch" style="left:26.00px;width:7.0px;transform:scaleX(1)">2</span><span class="ch" style="left:33.00px;width:7.0px;transform:scaleX(1)">4</span><span class="ch" style="left:40.00px;width:7.0px;transform:scaleX(1)">5</span><span class="ch" style="left:47.00px;width:7.0px;transform:scaleX(1)">8</span><span class="ch" style="left:54.00px;width:7.0px;transform:scaleX(1)">9</span></div>
<div class="cell" style="left:322px;top:377px;width:63px"><span style="left:2px;transform:scaleX(0.976);transform-origin:0 0">LANCHONETE</span></div>
<div class="cell" style="left:386px;top:377px;width:63px"><span class="ch" style="left:2.00px;width:7.0px;transform:scaleX(1)">9</span><span class="ch" style="left:9.00px;width:7.0px;transform:scaleX(1)">2</span><span class="ch" style="left:16.00px;width:5.9px;transform:translateY(0.5px) scale(1.45,1.3)">/</span><span class="ch" style="left:21.90px;width:7.0px;transform:scaleX(1)">0</span><span class="ch" style="left:28.90px;width:7.0px;transform:scaleX(1)">0</span><span class="ch" style="left:35.90px;width:7.0px;transform:scaleX(1)">3</span><span class="ch" style="left:42.90px;width:5.9px;transform:translateY(0.5px) scale(1.45,1.3)">/</span><span class="ch" style="left:48.80px;width:7.0px;transform:scaleX(1)">0</span><span class="ch" style="left:55.80px;width:7.0px;transform:scaleX(1)">0</span><span class="ch" style="left:62.80px;width:7.0px;transform:scaleX(1)">0</span><span class="ch" style="left:69.80px;width:7.0px;transform:scaleX(1)">1</span></div>
<div class="cell" style="left:450px;top:377px;width:63px"><span style="left:2px;transform:scaleX(0.976);transform-origin:0 0">LANCHONETE</span></div>
<div class="cell" style="left:514px;top:377px;width:63px"><span style="left:2px;transform:scaleX(1.031);transform-origin:0 0">MATINAIS</span></div>
<div class="cell" style="left:642px;top:377px;width:63px"><span class="ch" style="left:26.00px;width:7.0px;transform:scaleX(1)">6</span><span class="ch" style="left:33.00px;width:7.0px;transform:scaleX(1)">9</span><span class="ch" style="left:40.00px;width:7.0px;transform:scaleX(1)">3</span><span class="ch" style="left:47.00px;width:7.0px;transform:scaleX(1)">4</span><span class="ch" style="left:54.00px;width:7.0px;transform:scaleX(1)">2</span></div>
<div class="cell" style="left:706px;top:377px;width:63px"><span style="left:2px;transform:scaleX(0.969);transform-origin:0 0">PAO FRANCES</span></div>
<div class="cell" style="left:-9px;top:397px;width:63px"><span style="left:3px;transform:scaleX(0.968);transform-origin:0 0">NF</span></div>
<div class="cell" style="left:55px;top:397px;width:74px"><span class="ch" style="left:4.20px;width:7.0px;transform:scaleX(1)">2</span><span class="ch" style="left:11.20px;width:7.0px;transform:scaleX(1)">0</span><span class="ch" style="left:18.20px;width:5.9px;transform:translateY(0.5px) scale(1.45,1.3)">/</span><span class="ch" style="left:24.10px;width:7.0px;transform:scaleX(1)">1</span><span class="ch" style="left:31.10px;width:7.0px;transform:scaleX(1)">0</span><span class="ch" style="left:38.10px;width:5.9px;transform:translateY(0.5px) scale(1.45,1.3)">/</span><span class="ch" style="left:44.00px;width:7.0px;transform:scaleX(1)">2</span><span class="ch" style="left:51.00px;width:7.0px;transform:scaleX(1)">0</span><span class="ch" style="left:58.00px;width:7.0px;transform:scaleX(1)">1</span><span class="ch" style="left:65.00px;width:7.0px;transform:scaleX(1)">7</span></div>
<div class="cell" style="left:130px;top:397px;width:63px"><span class="ch" style="left:40.00px;width:7.0px;transform:scaleX(1)">1</span><span class="ch" style="left:47.00px;width:7.0px;transform:scaleX(1)">2</span><span class="ch" style="left:54.00px;width:7.0px;transform:scaleX(1)">7</span></div>
<div class="cell" style="left:194px;top:397px;width:63px"><span class="ch" style="left:47.00px;width:7.0px;transform:scaleX(1)">5</span><span class="ch" style="left:54.00px;width:7.0px;transform:scaleX(1)">5</span></div>
<div class="cell" style="left:258px;top:397px;width:63px"><span class="ch" style="left:26.00px;width:7.0px;transform:scaleX(1)">2</span><span class="ch" style="left:33.00px;width:7.0px;transform:scaleX(1)">4</span><span class="ch" style="left:40.00px;width:7.0px;transform:scaleX(1)">5</span><span class="ch" style="left:47.00px;width:7.0px;transform:scaleX(1)">8</span><span class="ch" style="left:54.00px;width:7.0px;transform:scaleX(1)">9</span></div>
<div class="cell" style="left:322px;top:397px;width:63px"><span style="left:2px;transform:scaleX(0.976);transform-origin:0 0">LANCHONETE</span></div>
<div class="cell" style="left:386px;top:397px;width:63px"><span class="ch" style="left:2.00px;width:7.0px;transform:scaleX(1)">9</span><span class="ch" style="left:9.00px;width:7.0px;transform:scaleX(1)">2</span><span class="ch" style="left:16.00px;width:5.9px;transform:translateY(0.5px) scale(1.45,1.3)">/</span><span class="ch" style="left:21.90px;width:7.0px;transform:scaleX(1)">0</span><span class="ch" style="left:28.90px;width:7.0px;transform:scaleX(1)">0</span><span class="ch" style="left:35.90px;width:7.0px;transform:scaleX(1)">1</span><span class="ch" style="left:42.90px;width:5.9px;transform:translateY(0.5px) scale(1.45,1.3)">/</span><span class="ch" style="left:48.80px;width:7.0px;transform:scaleX(1)">0</span><span class="ch" style="left:55.80px;width:7.0px;transform:scaleX(1)">0</span><span class="ch" style="left:62.80px;width:7.0px;transform:scaleX(1)">0</span><span class="ch" style="left:69.80px;width:7.0px;transform:scaleX(1)">1</span></div>
<div class="cell" style="left:450px;top:397px;width:63px"><span style="left:2px;transform:scaleX(0.976);transform-origin:0 0">LANCHONETE</span></div>
<div class="cell" style="left:514px;top:397px;width:63px"><span style="left:2px;transform:scaleX(0.927);transform-origin:0 0">SALGADOS</span></div>
<div class="cell" style="left:642px;top:397px;width:63px"><span class="ch" style="left:19.00px;width:7.0px;transform:scaleX(1)">1</span><span class="ch" style="left:26.00px;width:7.0px;transform:scaleX(1)">1</span><span class="ch" style="left:33.00px;width:7.0px;transform:scaleX(1)">8</span><span class="ch" style="left:40.00px;width:7.0px;transform:scaleX(1)">5</span><span class="ch" style="left:47.00px;width:7.0px;transform:scaleX(1)">9</span><span class="ch" style="left:54.00px;width:7.0px;transform:scaleX(1)">0</span></div>
<div class="cell" style="left:706px;top:397px;width:63px"><span style="left:2px;transform:scaleX(0.974);transform-origin:0 0">COXINHA</span></div>
<div class="cell" style="left:-9px;top:417px;width:63px"><span style="left:3px;transform:scaleX(0.968);transform-origin:0 0">NF</span></div>
<div class="cell" style="left:55px;top:417px;width:74px"><span class="ch" style="left:4.20px;width:7.0px;transform:scaleX(1)">2</span><span class="ch" style="left:11.20px;width:7.0px;transform:scaleX(1)">5</span><span class="ch" style="left:18.20px;width:5.9px;transform:translateY(0.5px) scale(1.45,1.3)">/</span><span class="ch" style="left:24.10px;width:7.0px;transform:scaleX(1)">1</span><span class="ch" style="left:31.10px;width:7.0px;transform:scaleX(1)">0</span><span class="ch" style="left:38.10px;width:5.9px;transform:translateY(0.5px) scale(1.45,1.3)">/</span><span class="ch" style="left:44.00px;width:7.0px;transform:scaleX(1)">2</span><span class="ch" style="left:51.00px;width:7.0px;transform:scaleX(1)">0</span><span class="ch" style="left:58.00px;width:7.0px;transform:scaleX(1)">1</span><span class="ch" style="left:65.00px;width:7.0px;transform:scaleX(1)">7</span></div>
<div class="cell" style="left:130px;top:417px;width:63px"><span class="ch" style="left:40.00px;width:7.0px;transform:scaleX(1)">1</span><span class="ch" style="left:47.00px;width:7.0px;transform:scaleX(1)">2</span><span class="ch" style="left:54.00px;width:7.0px;transform:scaleX(1)">8</span></div>
<div class="cell" style="left:194px;top:417px;width:63px"><span class="ch" style="left:47.00px;width:7.0px;transform:scaleX(1)">5</span><span class="ch" style="left:54.00px;width:7.0px;transform:scaleX(1)">5</span></div>
<div class="cell" style="left:258px;top:417px;width:63px"><span class="ch" style="left:26.00px;width:7.0px;transform:scaleX(1)">2</span><span class="ch" style="left:33.00px;width:7.0px;transform:scaleX(1)">4</span><span class="ch" style="left:40.00px;width:7.0px;transform:scaleX(1)">5</span><span class="ch" style="left:47.00px;width:7.0px;transform:scaleX(1)">8</span><span class="ch" style="left:54.00px;width:7.0px;transform:scaleX(1)">9</span></div>
<div class="cell" style="left:322px;top:417px;width:63px"><span style="left:2px;transform:scaleX(0.976);transform-origin:0 0">LANCHONETE</span></div>
<div class="cell" style="left:386px;top:417px;width:63px"><span class="ch" style="left:2.00px;width:7.0px;transform:scaleX(1)">9</span><span class="ch" style="left:9.00px;width:7.0px;transform:scaleX(1)">2</span><span class="ch" style="left:16.00px;width:5.9px;transform:translateY(0.5px) scale(1.45,1.3)">/</span><span class="ch" style="left:21.90px;width:7.0px;transform:scaleX(1)">0</span><span class="ch" style="left:28.90px;width:7.0px;transform:scaleX(1)">0</span><span class="ch" style="left:35.90px;width:7.0px;transform:scaleX(1)">2</span><span class="ch" style="left:42.90px;width:5.9px;transform:translateY(0.5px) scale(1.45,1.3)">/</span><span class="ch" style="left:48.80px;width:7.0px;transform:scaleX(1)">0</span><span class="ch" style="left:55.80px;width:7.0px;transform:scaleX(1)">0</span><span class="ch" style="left:62.80px;width:7.0px;transform:scaleX(1)">0</span><span class="ch" style="left:69.80px;width:7.0px;transform:scaleX(1)">1</span></div>
<div class="cell" style="left:450px;top:417px;width:63px"><span style="left:2px;transform:scaleX(0.976);transform-origin:0 0">LANCHONETE</span></div>
<div class="cell" style="left:514px;top:417px;width:63px"><span style="left:2px;transform:scaleX(0.881);transform-origin:0 0">REFRIGERANTES</span></div>
<div class="cell" style="left:642px;top:417px;width:63px"><span class="ch" style="left:26.00px;width:7.0px;transform:scaleX(1)">6</span><span class="ch" style="left:33.00px;width:7.0px;transform:scaleX(1)">9</span><span class="ch" style="left:40.00px;width:7.0px;transform:scaleX(1)">2</span><span class="ch" style="left:47.00px;width:7.0px;transform:scaleX(1)">4</span><span class="ch" style="left:54.00px;width:7.0px;transform:scaleX(1)">3</span></div>
<div class="cell" style="left:706px;top:417px;width:63px"><span style="left:2px;transform:scaleX(0.855);transform-origin:0 0">REFRESCO</span></div>
<div class="cell" style="left:-9px;top:437px;width:63px"><span style="left:3px;transform:scaleX(0.968);transform-origin:0 0">NF</span></div>
<div class="cell" style="left:55px;top:437px;width:74px"><span class="ch" style="left:4.20px;width:7.0px;transform:scaleX(1)">2</span><span class="ch" style="left:11.20px;width:7.0px;transform:scaleX(1)">5</span><span class="ch" style="left:18.20px;width:5.9px;transform:translateY(0.5px) scale(1.45,1.3)">/</span><span class="ch" style="left:24.10px;width:7.0px;transform:scaleX(1)">1</span><span class="ch" style="left:31.10px;width:7.0px;transform:scaleX(1)">0</span><span class="ch" style="left:38.10px;width:5.9px;transform:translateY(0.5px) scale(1.45,1.3)">/</span><span class="ch" style="left:44.00px;width:7.0px;transform:scaleX(1)">2</span><span class="ch" style="left:51.00px;width:7.0px;transform:scaleX(1)">0</span><span class="ch" style="left:58.00px;width:7.0px;transform:scaleX(1)">1</span><span class="ch" style="left:65.00px;width:7.0px;transform:scaleX(1)">7</span></div>
<div class="cell" style="left:130px;top:437px;width:63px"><span class="ch" style="left:40.00px;width:7.0px;transform:scaleX(1)">1</span><span class="ch" style="left:47.00px;width:7.0px;transform:scaleX(1)">2</span><span class="ch" style="left:54.00px;width:7.0px;transform:scaleX(1)">8</span></div>
<div class="cell" style="left:194px;top:437px;width:63px"><span class="ch" style="left:47.00px;width:7.0px;transform:scaleX(1)">5</span><span class="ch" style="left:54.00px;width:7.0px;transform:scaleX(1)">5</span></div>
<div class="cell" style="left:258px;top:437px;width:63px"><span class="ch" style="left:26.00px;width:7.0px;transform:scaleX(1)">2</span><span class="ch" style="left:33.00px;width:7.0px;transform:scaleX(1)">4</span><span class="ch" style="left:40.00px;width:7.0px;transform:scaleX(1)">5</span><span class="ch" style="left:47.00px;width:7.0px;transform:scaleX(1)">8</span><span class="ch" style="left:54.00px;width:7.0px;transform:scaleX(1)">9</span></div>
<div class="cell" style="left:322px;top:437px;width:63px"><span style="left:2px;transform:scaleX(0.976);transform-origin:0 0">LANCHONETE</span></div>
<div class="cell" style="left:386px;top:437px;width:63px"><span class="ch" style="left:2.00px;width:7.0px;transform:scaleX(1)">9</span><span class="ch" style="left:9.00px;width:7.0px;transform:scaleX(1)">2</span><span class="ch" style="left:16.00px;width:5.9px;transform:translateY(0.5px) scale(1.45,1.3)">/</span><span class="ch" style="left:21.90px;width:7.0px;transform:scaleX(1)">0</span><span class="ch" style="left:28.90px;width:7.0px;transform:scaleX(1)">0</span><span class="ch" style="left:35.90px;width:7.0px;transform:scaleX(1)">3</span><span class="ch" style="left:42.90px;width:5.9px;transform:translateY(0.5px) scale(1.45,1.3)">/</span><span class="ch" style="left:48.80px;width:7.0px;transform:scaleX(1)">0</span><span class="ch" style="left:55.80px;width:7.0px;transform:scaleX(1)">0</span><span class="ch" style="left:62.80px;width:7.0px;transform:scaleX(1)">0</span><span class="ch" style="left:69.80px;width:7.0px;transform:scaleX(1)">1</span></div>
<div class="cell" style="left:450px;top:437px;width:63px"><span style="left:2px;transform:scaleX(0.976);transform-origin:0 0">LANCHONETE</span></div>
<div class="cell" style="left:514px;top:437px;width:63px"><span style="left:2px;transform:scaleX(1.031);transform-origin:0 0">MATINAIS</span></div>
<div class="cell" style="left:642px;top:437px;width:63px"><span class="ch" style="left:26.00px;width:7.0px;transform:scaleX(1)">4</span><span class="ch" style="left:33.00px;width:7.0px;transform:scaleX(1)">8</span><span class="ch" style="left:40.00px;width:7.0px;transform:scaleX(1)">8</span><span class="ch" style="left:47.00px;width:7.0px;transform:scaleX(1)">0</span><span class="ch" style="left:54.00px;width:7.0px;transform:scaleX(1)">4</span></div>
<div class="cell" style="left:706px;top:437px;width:63px"><span style="left:2px;transform:scaleX(0.928);transform-origin:0 0">BOLO CASEIRO</span></div>
<div class="cell" style="left:-9px;top:457px;width:63px"><span style="left:3px;transform:scaleX(0.968);transform-origin:0 0">NF</span></div>
<div class="cell" style="left:55px;top:457px;width:74px"><span class="ch" style="left:4.20px;width:7.0px;transform:scaleX(1)">2</span><span class="ch" style="left:11.20px;width:7.0px;transform:scaleX(1)">5</span><span class="ch" style="left:18.20px;width:5.9px;transform:translateY(0.5px) scale(1.45,1.3)">/</span><span class="ch" style="left:24.10px;width:7.0px;transform:scaleX(1)">1</span><span class="ch" style="left:31.10px;width:7.0px;transform:scaleX(1)">0</span><span class="ch" style="left:38.10px;width:5.9px;transform:translateY(0.5px) scale(1.45,1.3)">/</span><span class="ch" style="left:44.00px;width:7.0px;transform:scaleX(1)">2</span><span class="ch" style="left:51.00px;width:7.0px;transform:scaleX(1)">0</span><span class="ch" style="left:58.00px;width:7.0px;transform:scaleX(1)">1</span><span class="ch" style="left:65.00px;width:7.0px;transform:scaleX(1)">7</span></div>
<div class="cell" style="left:130px;top:457px;width:63px"><span class="ch" style="left:40.00px;width:7.0px;transform:scaleX(1)">1</span><span class="ch" style="left:47.00px;width:7.0px;transform:scaleX(1)">2</span><span class="ch" style="left:54.00px;width:7.0px;transform:scaleX(1)">8</span></div>
<div class="cell" style="left:194px;top:457px;width:63px"><span class="ch" style="left:47.00px;width:7.0px;transform:scaleX(1)">5</span><span class="ch" style="left:54.00px;width:7.0px;transform:scaleX(1)">5</span></div>
<div class="cell" style="left:258px;top:457px;width:63px"><span class="ch" style="left:26.00px;width:7.0px;transform:scaleX(1)">2</span><span class="ch" style="left:33.00px;width:7.0px;transform:scaleX(1)">4</span><span class="ch" style="left:40.00px;width:7.0px;transform:scaleX(1)">5</span><span class="ch" style="left:47.00px;width:7.0px;transform:scaleX(1)">8</span><span class="ch" style="left:54.00px;width:7.0px;transform:scaleX(1)">9</span></div>
<div class="cell" style="left:322px;top:457px;width:63px"><span style="left:2px;transform:scaleX(0.976);transform-origin:0 0">LANCHONETE</span></div>
<div class="cell" style="left:386px;top:457px;width:63px"><span class="ch" style="left:2.00px;width:7.0px;transform:scaleX(1)">9</span><span class="ch" style="left:9.00px;width:7.0px;transform:scaleX(1)">2</span><span class="ch" style="left:16.00px;width:5.9px;transform:translateY(0.5px) scale(1.45,1.3)">/</span><span class="ch" style="left:21.90px;width:7.0px;transform:scaleX(1)">0</span><span class="ch" style="left:28.90px;width:7.0px;transform:scaleX(1)">0</span><span class="ch" style="left:35.90px;width:7.0px;transform:scaleX(1)">1</span><span class="ch" style="left:42.90px;width:5.9px;transform:translateY(0.5px) scale(1.45,1.3)">/</span><span class="ch" style="left:48.80px;width:7.0px;transform:scaleX(1)">0</span><span class="ch" style="left:55.80px;width:7.0px;transform:scaleX(1)">0</span><span class="ch" style="left:62.80px;width:7.0px;transform:scaleX(1)">0</span><span class="ch" style="left:69.80px;width:7.0px;transform:scaleX(1)">1</span></div>
<div class="cell" style="left:450px;top:457px;width:63px"><span style="left:2px;transform:scaleX(0.976);transform-origin:0 0">LANCHONETE</span></div>
<div class="cell" style="left:514px;top:457px;width:63px"><span style="left:2px;transform:scaleX(0.927);transform-origin:0 0">SALGADOS</span></div>
<div class="cell" style="left:642px;top:457px;width:63px"><span class="ch" style="left:26.00px;width:7.0px;transform:scaleX(1)">6</span><span class="ch" style="left:33.00px;width:7.0px;transform:scaleX(1)">9</span><span class="ch" style="left:40.00px;width:7.0px;transform:scaleX(1)">1</span><span class="ch" style="left:47.00px;width:7.0px;transform:scaleX(1)">8</span><span class="ch" style="left:54.00px;width:7.0px;transform:scaleX(1)">2</span></div>
<div class="cell" style="left:706px;top:457px;width:63px"><span style="left:2px;transform:scaleX(0.898);transform-origin:0 0">PASTEL CC</span></div>
<div class="cell" style="left:-9px;top:477px;width:63px"><span style="left:3px;transform:scaleX(0.968);transform-origin:0 0">NF</span></div>
<div class="cell" style="left:55px;top:477px;width:74px"><span class="ch" style="left:4.20px;width:7.0px;transform:scaleX(1)">2</span><span class="ch" style="left:11.20px;width:7.0px;transform:scaleX(1)">5</span><span class="ch" style="left:18.20px;width:5.9px;transform:translateY(0.5px) scale(1.45,1.3)">/</span><span class="ch" style="left:24.10px;width:7.0px;transform:scaleX(1)">1</span><span class="ch" style="left:31.10px;width:7.0px;transform:scaleX(1)">0</span><span class="ch" style="left:38.10px;width:5.9px;transform:translateY(0.5px) scale(1.45,1.3)">/</span><span class="ch" style="left:44.00px;width:7.0px;transform:scaleX(1)">2</span><span class="ch" style="left:51.00px;width:7.0px;transform:scaleX(1)">0</span><span class="ch" style="left:58.00px;width:7.0px;transform:scaleX(1)">1</span><span class="ch" style="left:65.00px;width:7.0px;transform:scaleX(1)">7</span></div>
<div class="cell" style="left:130px;top:477px;width:63px"><span class="ch" style="left:40.00px;width:7.0px;transform:scaleX(1)">1</span><span class="ch" style="left:47.00px;width:7.0px;transform:scaleX(1)">2</span><span class="ch" style="left:54.00px;width:7.0px;transform:scaleX(1)">8</span></div>
<div class="cell" style="left:194px;top:477px;width:63px"><span class="ch" style="left:47.00px;width:7.0px;transform:scaleX(1)">5</span><span class="ch" style="left:54.00px;width:7.0px;transform:scaleX(1)">5</span></div>
<div class="cell" style="left:258px;top:477px;width:63px"><span class="ch" style="left:26.00px;width:7.0px;transform:scaleX(1)">2</span><span class="ch" style="left:33.00px;width:7.0px;transform:scaleX(1)">4</span><span class="ch" style="left:40.00px;width:7.0px;transform:scaleX(1)">5</span><span class="ch" style="left:47.00px;width:7.0px;transform:scaleX(1)">8</span><span class="ch" style="left:54.00px;width:7.0px;transform:scaleX(1)">9</span></div>
<div class="cell" style="left:322px;top:477px;width:63px"><span style="left:2px;transform:scaleX(0.976);transform-origin:0 0">LANCHONETE</span></div>
<div class="cell" style="left:386px;top:477px;width:63px"><span class="ch" style="left:2.00px;width:7.0px;transform:scaleX(1)">9</span><span class="ch" style="left:9.00px;width:7.0px;transform:scaleX(1)">2</span><span class="ch" style="left:16.00px;width:5.9px;transform:translateY(0.5px) scale(1.45,1.3)">/</span><span class="ch" style="left:21.90px;width:7.0px;transform:scaleX(1)">0</span><span class="ch" style="left:28.90px;width:7.0px;transform:scaleX(1)">0</span><span class="ch" style="left:35.90px;width:7.0px;transform:scaleX(1)">3</span><span class="ch" style="left:42.90px;width:5.9px;transform:translateY(0.5px) scale(1.45,1.3)">/</span><span class="ch" style="left:48.80px;width:7.0px;transform:scaleX(1)">0</span><span class="ch" style="left:55.80px;width:7.0px;transform:scaleX(1)">0</span><span class="ch" style="left:62.80px;width:7.0px;transform:scaleX(1)">0</span><span class="ch" style="left:69.80px;width:7.0px;transform:scaleX(1)">1</span></div>
<div class="cell" style="left:450px;top:477px;width:63px"><span style="left:2px;transform:scaleX(0.976);transform-origin:0 0">LANCHONETE</span></div>
<div class="cell" style="left:514px;top:477px;width:63px"><span style="left:2px;transform:scaleX(1.031);transform-origin:0 0">MATINAIS</span></div>
<div class="cell" style="left:642px;top:477px;width:63px"><span class="ch" style="left:26.00px;width:7.0px;transform:scaleX(1)">6</span><span class="ch" style="left:33.00px;width:7.0px;transform:scaleX(1)">9</span><span class="ch" style="left:40.00px;width:7.0px;transform:scaleX(1)">2</span><span class="ch" style="left:47.00px;width:7.0px;transform:scaleX(1)">6</span><span class="ch" style="left:54.00px;width:7.0px;transform:scaleX(1)">7</span></div>
<div class="cell" style="left:706px;top:477px;width:63px"><span style="left:2px;transform:scaleX(0.943);transform-origin:0 0">CAFEZINHO</span></div>
<div class="cell" style="left:-9px;top:497px;width:63px"><span style="left:3px;transform:scaleX(0.968);transform-origin:0 0">NF</span></div>
<div class="cell" style="left:55px;top:497px;width:74px"><span class="ch" style="left:4.20px;width:7.0px;transform:scaleX(1)">2</span><span class="ch" style="left:11.20px;width:7.0px;transform:scaleX(1)">5</span><span class="ch" style="left:18.20px;width:5.9px;transform:translateY(0.5px) scale(1.45,1.3)">/</span><span class="ch" style="left:24.10px;width:7.0px;transform:scaleX(1)">1</span><span class="ch" style="left:31.10px;width:7.0px;transform:scaleX(1)">0</span><span class="ch" style="left:38.10px;width:5.9px;transform:translateY(0.5px) scale(1.45,1.3)">/</span><span class="ch" style="left:44.00px;width:7.0px;transform:scaleX(1)">2</span><span class="ch" style="left:51.00px;width:7.0px;transform:scaleX(1)">0</span><span class="ch" style="left:58.00px;width:7.0px;transform:scaleX(1)">1</span><span class="ch" style="left:65.00px;width:7.0px;transform:scaleX(1)">7</span></div>
<div class="cell" style="left:130px;top:497px;width:63px"><span class="ch" style="left:40.00px;width:7.0px;transform:scaleX(1)">1</span><span class="ch" style="left:47.00px;width:7.0px;transform:scaleX(1)">2</span><span class="ch" style="left:54.00px;width:7.0px;transform:scaleX(1)">8</span></div>
<div class="cell" style="left:194px;top:497px;width:63px"><span class="ch" style="left:47.00px;width:7.0px;transform:scaleX(1)">5</span><span class="ch" style="left:54.00px;width:7.0px;transform:scaleX(1)">5</span></div>
<div class="cell" style="left:258px;top:497px;width:63px"><span class="ch" style="left:26.00px;width:7.0px;transform:scaleX(1)">2</span><span class="ch" style="left:33.00px;width:7.0px;transform:scaleX(1)">4</span><span class="ch" style="left:40.00px;width:7.0px;transform:scaleX(1)">5</span><span class="ch" style="left:47.00px;width:7.0px;transform:scaleX(1)">8</span><span class="ch" style="left:54.00px;width:7.0px;transform:scaleX(1)">9</span></div>
<div class="cell" style="left:322px;top:497px;width:63px"><span style="left:2px;transform:scaleX(0.976);transform-origin:0 0">LANCHONETE</span></div>
<div class="cell" style="left:386px;top:497px;width:63px"><span class="ch" style="left:2.00px;width:7.0px;transform:scaleX(1)">9</span><span class="ch" style="left:9.00px;width:7.0px;transform:scaleX(1)">2</span><span class="ch" style="left:16.00px;width:5.9px;transform:translateY(0.5px) scale(1.45,1.3)">/</span><span class="ch" style="left:21.90px;width:7.0px;transform:scaleX(1)">0</span><span class="ch" style="left:28.90px;width:7.0px;transform:scaleX(1)">0</span><span class="ch" style="left:35.90px;width:7.0px;transform:scaleX(1)">3</span><span class="ch" style="left:42.90px;width:5.9px;transform:translateY(0.5px) scale(1.45,1.3)">/</span><span class="ch" style="left:48.80px;width:7.0px;transform:scaleX(1)">0</span><span class="ch" style="left:55.80px;width:7.0px;transform:scaleX(1)">0</span><span class="ch" style="left:62.80px;width:7.0px;transform:scaleX(1)">0</span><span class="ch" style="left:69.80px;width:7.0px;transform:scaleX(1)">1</span></div>
<div class="cell" style="left:450px;top:497px;width:63px"><span style="left:2px;transform:scaleX(0.976);transform-origin:0 0">LANCHONETE</span></div>
<div class="cell" style="left:514px;top:497px;width:63px"><span style="left:2px;transform:scaleX(1.031);transform-origin:0 0">MATINAIS</span></div>
<div class="cell" style="left:642px;top:497px;width:63px"><span class="ch" style="left:26.00px;width:7.0px;transform:scaleX(1)">6</span><span class="ch" style="left:33.00px;width:7.0px;transform:scaleX(1)">9</span><span class="ch" style="left:40.00px;width:7.0px;transform:scaleX(1)">2</span><span class="ch" style="left:47.00px;width:7.0px;transform:scaleX(1)">7</span><span class="ch" style="left:54.00px;width:7.0px;transform:scaleX(1)">4</span></div>
<div class="cell" style="left:706px;top:497px;width:63px"><span style="left:2px;transform:scaleX(0.886);transform-origin:0 0">CAFE C LEITE</span></div>
<div class="cell" style="left:-9px;top:517px;width:63px"><span style="left:3px;transform:scaleX(0.968);transform-origin:0 0">NF</span></div>
<div class="cell" style="left:55px;top:517px;width:74px"><span class="ch" style="left:4.20px;width:7.0px;transform:scaleX(1)">2</span><span class="ch" style="left:11.20px;width:7.0px;transform:scaleX(1)">5</span><span class="ch" style="left:18.20px;width:5.9px;transform:translateY(0.5px) scale(1.45,1.3)">/</span><span class="ch" style="left:24.10px;width:7.0px;transform:scaleX(1)">1</span><span class="ch" style="left:31.10px;width:7.0px;transform:scaleX(1)">0</span><span class="ch" style="left:38.10px;width:5.9px;transform:translateY(0.5px) scale(1.45,1.3)">/</span><span class="ch" style="left:44.00px;width:7.0px;transform:scaleX(1)">2</span><span class="ch" style="left:51.00px;width:7.0px;transform:scaleX(1)">0</span><span class="ch" style="left:58.00px;width:7.0px;transform:scaleX(1)">1</span><span class="ch" style="left:65.00px;width:7.0px;transform:scaleX(1)">7</span></div>
<div class="cell" style="left:130px;top:517px;width:63px"><span class="ch" style="left:40.00px;width:7.0px;transform:scaleX(1)">1</span><span class="ch" style="left:47.00px;width:7.0px;transform:scaleX(1)">2</span><span class="ch" style="left:54.00px;width:7.0px;transform:scaleX(1)">8</span></div>
<div class="cell" style="left:194px;top:517px;width:63px"><span class="ch" style="left:47.00px;width:7.0px;transform:scaleX(1)">5</span><span class="ch" style="left:54.00px;width:7.0px;transform:scaleX(1)">5</span></div>
<div class="cell" style="left:258px;top:517px;width:63px"><span class="ch" style="left:26.00px;width:7.0px;transform:scaleX(1)">2</span><span class="ch" style="left:33.00px;width:7.0px;transform:scaleX(1)">4</span><span class="ch" style="left:40.00px;width:7.0px;transform:scaleX(1)">5</span><span class="ch" style="left:47.00px;width:7.0px;transform:scaleX(1)">8</span><span class="ch" style="left:54.00px;width:7.0px;transform:scaleX(1)">9</span></div>
<div class="cell" style="left:322px;top:517px;width:63px"><span style="left:2px;transform:scaleX(0.976);transform-origin:0 0">LANCHONETE</span></div>
<div class="cell" style="left:386px;top:517px;width:63px"><span class="ch" style="left:2.00px;width:7.0px;transform:scaleX(1)">9</span><span class="ch" style="left:9.00px;width:7.0px;transform:scaleX(1)">2</span><span class="ch" style="left:16.00px;width:5.9px;transform:translateY(0.5px) scale(1.45,1.3)">/</span><span class="ch" style="left:21.90px;width:7.0px;transform:scaleX(1)">0</span><span class="ch" style="left:28.90px;width:7.0px;transform:scaleX(1)">0</span><span class="ch" style="left:35.90px;width:7.0px;transform:scaleX(1)">3</span><span class="ch" style="left:42.90px;width:5.9px;transform:translateY(0.5px) scale(1.45,1.3)">/</span><span class="ch" style="left:48.80px;width:7.0px;transform:scaleX(1)">0</span><span class="ch" style="left:55.80px;width:7.0px;transform:scaleX(1)">0</span><span class="ch" style="left:62.80px;width:7.0px;transform:scaleX(1)">0</span><span class="ch" style="left:69.80px;width:7.0px;transform:scaleX(1)">1</span></div>
<div class="cell" style="left:450px;top:517px;width:63px"><span style="left:2px;transform:scaleX(0.976);transform-origin:0 0">LANCHONETE</span></div>
<div class="cell" style="left:514px;top:517px;width:63px"><span style="left:2px;transform:scaleX(1.031);transform-origin:0 0">MATINAIS</span></div>
<div class="cell" style="left:642px;top:517px;width:63px"><span class="ch" style="left:26.00px;width:7.0px;transform:scaleX(1)">6</span><span class="ch" style="left:33.00px;width:7.0px;transform:scaleX(1)">9</span><span class="ch" style="left:40.00px;width:7.0px;transform:scaleX(1)">3</span><span class="ch" style="left:47.00px;width:7.0px;transform:scaleX(1)">4</span><span class="ch" style="left:54.00px;width:7.0px;transform:scaleX(1)">2</span></div>
<div class="cell" style="left:706px;top:517px;width:63px"><span style="left:2px;transform:scaleX(0.969);transform-origin:0 0">PAO FRANCES</span></div>
<div class="cell" style="left:-9px;top:537px;width:63px"><span style="left:3px;transform:scaleX(0.968);transform-origin:0 0">NF</span></div>
<div class="cell" style="left:55px;top:537px;width:74px"><span class="ch" style="left:4.20px;width:7.0px;transform:scaleX(1)">2</span><span class="ch" style="left:11.20px;width:7.0px;transform:scaleX(1)">5</span><span class="ch" style="left:18.20px;width:5.9px;transform:translateY(0.5px) scale(1.45,1.3)">/</span><span class="ch" style="left:24.10px;width:7.0px;transform:scaleX(1)">1</span><span class="ch" style="left:31.10px;width:7.0px;transform:scaleX(1)">0</span><span class="ch" style="left:38.10px;width:5.9px;transform:translateY(0.5px) scale(1.45,1.3)">/</span><span class="ch" style="left:44.00px;width:7.0px;transform:scaleX(1)">2</span><span class="ch" style="left:51.00px;width:7.0px;transform:scaleX(1)">0</span><span class="ch" style="left:58.00px;width:7.0px;transform:scaleX(1)">1</span><span class="ch" style="left:65.00px;width:7.0px;transform:scaleX(1)">7</span></div>
<div class="cell" style="left:130px;top:537px;width:63px"><span class="ch" style="left:40.00px;width:7.0px;transform:scaleX(1)">1</span><span class="ch" style="left:47.00px;width:7.0px;transform:scaleX(1)">2</span><span class="ch" style="left:54.00px;width:7.0px;transform:scaleX(1)">8</span></div>
<div class="cell" style="left:194px;top:537px;width:63px"><span class="ch" style="left:47.00px;width:7.0px;transform:scaleX(1)">5</span><span class="ch" style="left:54.00px;width:7.0px;transform:scaleX(1)">5</span></div>
<div class="cell" style="left:258px;top:537px;width:63px"><span class="ch" style="left:26.00px;width:7.0px;transform:scaleX(1)">2</span><span class="ch" style="left:33.00px;width:7.0px;transform:scaleX(1)">4</span><span class="ch" style="left:40.00px;width:7.0px;transform:scaleX(1)">5</span><span class="ch" style="left:47.00px;width:7.0px;transform:scaleX(1)">8</span><span class="ch" style="left:54.00px;width:7.0px;transform:scaleX(1)">9</span></div>
<div class="cell" style="left:322px;top:537px;width:63px"><span style="left:2px;transform:scaleX(0.976);transform-origin:0 0">LANCHONETE</span></div>
<div class="cell" style="left:386px;top:537px;width:63px"><span class="ch" style="left:2.00px;width:7.0px;transform:scaleX(1)">9</span><span class="ch" style="left:9.00px;width:7.0px;transform:scaleX(1)">2</span><span class="ch" style="left:16.00px;width:5.9px;transform:translateY(0.5px) scale(1.45,1.3)">/</span><span class="ch" style="left:21.90px;width:7.0px;transform:scaleX(1)">0</span><span class="ch" style="left:28.90px;width:7.0px;transform:scaleX(1)">0</span><span class="ch" style="left:35.90px;width:7.0px;transform:scaleX(1)">1</span><span class="ch" style="left:42.90px;width:5.9px;transform:translateY(0.5px) scale(1.45,1.3)">/</span><span class="ch" style="left:48.80px;width:7.0px;transform:scaleX(1)">0</span><span class="ch" style="left:55.80px;width:7.0px;transform:scaleX(1)">0</span><span class="ch" style="left:62.80px;width:7.0px;transform:scaleX(1)">0</span><span class="ch" style="left:69.80px;width:7.0px;transform:scaleX(1)">1</span></div>
<div class="cell" style="left:450px;top:537px;width:63px"><span style="left:2px;transform:scaleX(0.976);transform-origin:0 0">LANCHONETE</span></div>
<div class="cell" style="left:514px;top:537px;width:63px"><span style="left:2px;transform:scaleX(0.927);transform-origin:0 0">SALGADOS</span></div>
<div class="cell" style="left:642px;top:537px;width:63px"><span class="ch" style="left:19.00px;width:7.0px;transform:scaleX(1)">1</span><span class="ch" style="left:26.00px;width:7.0px;transform:scaleX(1)">1</span><span class="ch" style="left:33.00px;width:7.0px;transform:scaleX(1)">8</span><span class="ch" style="left:40.00px;width:7.0px;transform:scaleX(1)">5</span><span class="ch" style="left:47.00px;width:7.0px;transform:scaleX(1)">9</span><span class="ch" style="left:54.00px;width:7.0px;transform:scaleX(1)">0</span></div>
<div class="cell" style="left:706px;top:537px;width:63px"><span style="left:2px;transform:scaleX(0.974);transform-origin:0 0">COXINHA</span></div>
<div class="cell" style="left:-9px;top:557px;width:63px"><span style="left:3px;transform:scaleX(0.968);transform-origin:0 0">NF</span></div>
<div class="cell" style="left:55px;top:557px;width:74px"><span class="ch" style="left:4.20px;width:7.0px;transform:scaleX(1)">2</span><span class="ch" style="left:11.20px;width:7.0px;transform:scaleX(1)">5</span><span class="ch" style="left:18.20px;width:5.9px;transform:translateY(0.5px) scale(1.45,1.3)">/</span><span class="ch" style="left:24.10px;width:7.0px;transform:scaleX(1)">1</span><span class="ch" style="left:31.10px;width:7.0px;transform:scaleX(1)">0</span><span class="ch" style="left:38.10px;width:5.9px;transform:translateY(0.5px) scale(1.45,1.3)">/</span><span class="ch" style="left:44.00px;width:7.0px;transform:scaleX(1)">2</span><span class="ch" style="left:51.00px;width:7.0px;transform:scaleX(1)">0</span><span class="ch" style="left:58.00px;width:7.0px;transform:scaleX(1)">1</span><span class="ch" style="left:65.00px;width:7.0px;transform:scaleX(1)">7</span></div>
<div class="cell" style="left:130px;top:557px;width:63px"><span class="ch" style="left:40.00px;width:7.0px;transform:scaleX(1)">1</span><span class="ch" style="left:47.00px;width:7.0px;transform:scaleX(1)">2</span><span class="ch" style="left:54.00px;width:7.0px;transform:scaleX(1)">8</span></div>
<div class="cell" style="left:194px;top:557px;width:63px"><span class="ch" style="left:47.00px;width:7.0px;transform:scaleX(1)">5</span><span class="ch" style="left:54.00px;width:7.0px;transform:scaleX(1)">5</span></div>
<div class="cell" style="left:258px;top:557px;width:63px"><span class="ch" style="left:26.00px;width:7.0px;transform:scaleX(1)">2</span><span class="ch" style="left:33.00px;width:7.0px;transform:scaleX(1)">4</span><span class="ch" style="left:40.00px;width:7.0px;transform:scaleX(1)">5</span><span class="ch" style="left:47.00px;width:7.0px;transform:scaleX(1)">8</span><span class="ch" style="left:54.00px;width:7.0px;transform:scaleX(1)">9</span></div>
<div class="cell" style="left:322px;top:557px;width:63px"><span style="left:2px;transform:scaleX(0.976);transform-origin:0 0">LANCHONETE</span></div>
<div class="cell" style="left:386px;top:557px;width:63px"><span class="ch" style="left:2.00px;width:7.0px;transform:scaleX(1)">9</span><span class="ch" style="left:9.00px;width:7.0px;transform:scaleX(1)">2</span><span class="ch" style="left:16.00px;width:5.9px;transform:translateY(0.5px) scale(1.45,1.3)">/</span><span class="ch" style="left:21.90px;width:7.0px;transform:scaleX(1)">0</span><span class="ch" style="left:28.90px;width:7.0px;transform:scaleX(1)">0</span><span class="ch" style="left:35.90px;width:7.0px;transform:scaleX(1)">2</span><span class="ch" style="left:42.90px;width:5.9px;transform:translateY(0.5px) scale(1.45,1.3)">/</span><span class="ch" style="left:48.80px;width:7.0px;transform:scaleX(1)">0</span><span class="ch" style="left:55.80px;width:7.0px;transform:scaleX(1)">0</span><span class="ch" style="left:62.80px;width:7.0px;transform:scaleX(1)">0</span><span class="ch" style="left:69.80px;width:7.0px;transform:scaleX(1)">1</span></div>
<div class="cell" style="left:450px;top:557px;width:63px"><span style="left:2px;transform:scaleX(0.976);transform-origin:0 0">LANCHONETE</span></div>
<div class="cell" style="left:514px;top:557px;width:63px"><span style="left:2px;transform:scaleX(0.881);transform-origin:0 0">REFRIGERANTES</span></div>
<div class="cell" style="left:642px;top:557px;width:63px"><span class="ch" style="left:26.00px;width:7.0px;transform:scaleX(1)">6</span><span class="ch" style="left:33.00px;width:7.0px;transform:scaleX(1)">9</span><span class="ch" style="left:40.00px;width:7.0px;transform:scaleX(1)">2</span><span class="ch" style="left:47.00px;width:7.0px;transform:scaleX(1)">4</span><span class="ch" style="left:54.00px;width:7.0px;transform:scaleX(1)">3</span></div>
<div class="cell" style="left:706px;top:557px;width:63px"><span style="left:2px;transform:scaleX(0.855);transform-origin:0 0">REFRESCO</span></div>
<div class="cell" style="left:-9px;top:577px;width:63px"><span style="left:3px;transform:scaleX(0.968);transform-origin:0 0">NF</span></div>
<div class="cell" style="left:55px;top:577px;width:74px"><span class="ch" style="left:4.20px;width:7.0px;transform:scaleX(1)">2</span><span class="ch" style="left:11.20px;width:7.0px;transform:scaleX(1)">5</span><span class="ch" style="left:18.20px;width:5.9px;transform:translateY(0.5px) scale(1.45,1.3)">/</span><span class="ch" style="left:24.10px;width:7.0px;transform:scaleX(1)">1</span><span class="ch" style="left:31.10px;width:7.0px;transform:scaleX(1)">0</span><span class="ch" style="left:38.10px;width:5.9px;transform:translateY(0.5px) scale(1.45,1.3)">/</span><span class="ch" style="left:44.00px;width:7.0px;transform:scaleX(1)">2</span><span class="ch" style="left:51.00px;width:7.0px;transform:scaleX(1)">0</span><span class="ch" style="left:58.00px;width:7.0px;transform:scaleX(1)">1</span><span class="ch" style="left:65.00px;width:7.0px;transform:scaleX(1)">7</span></div>
<div class="cell" style="left:130px;top:577px;width:63px"><span class="ch" style="left:40.00px;width:7.0px;transform:scaleX(1)">1</span><span class="ch" style="left:47.00px;width:7.0px;transform:scaleX(1)">2</span><span class="ch" style="left:54.00px;width:7.0px;transform:scaleX(1)">8</span></div>
<div class="cell" style="left:194px;top:577px;width:63px"><span class="ch" style="left:47.00px;width:7.0px;transform:scaleX(1)">5</span><span class="ch" style="left:54.00px;width:7.0px;transform:scaleX(1)">5</span></div>
<div class="cell" style="left:258px;top:577px;width:63px"><span class="ch" style="left:26.00px;width:7.0px;transform:scaleX(1)">2</span><span class="ch" style="left:33.00px;width:7.0px;transform:scaleX(1)">4</span><span class="ch" style="left:40.00px;width:7.0px;transform:scaleX(1)">5</span><span class="ch" style="left:47.00px;width:7.0px;transform:scaleX(1)">8</span><span class="ch" style="left:54.00px;width:7.0px;transform:scaleX(1)">9</span></div>
<div class="cell" style="left:322px;top:577px;width:63px"><span style="left:2px;transform:scaleX(0.976);transform-origin:0 0">LANCHONETE</span></div>
<div class="cell" style="left:386px;top:577px;width:63px"><span class="ch" style="left:2.00px;width:7.0px;transform:scaleX(1)">9</span><span class="ch" style="left:9.00px;width:7.0px;transform:scaleX(1)">2</span><span class="ch" style="left:16.00px;width:5.9px;transform:translateY(0.5px) scale(1.45,1.3)">/</span><span class="ch" style="left:21.90px;width:7.0px;transform:scaleX(1)">0</span><span class="ch" style="left:28.90px;width:7.0px;transform:scaleX(1)">0</span><span class="ch" style="left:35.90px;width:7.0px;transform:scaleX(1)">3</span><span class="ch" style="left:42.90px;width:5.9px;transform:translateY(0.5px) scale(1.45,1.3)">/</span><span class="ch" style="left:48.80px;width:7.0px;transform:scaleX(1)">0</span><span class="ch" style="left:55.80px;width:7.0px;transform:scaleX(1)">0</span><span class="ch" style="left:62.80px;width:7.0px;transform:scaleX(1)">0</span><span class="ch" style="left:69.80px;width:7.0px;transform:scaleX(1)">1</span></div>
<div class="cell" style="left:450px;top:577px;width:63px"><span style="left:2px;transform:scaleX(0.976);transform-origin:0 0">LANCHONETE</span></div>
<div class="cell" style="left:514px;top:577px;width:63px"><span style="left:2px;transform:scaleX(1.031);transform-origin:0 0">MATINAIS</span></div>
<div class="cell" style="left:642px;top:577px;width:63px"><span class="ch" style="left:26.00px;width:7.0px;transform:scaleX(1)">4</span><span class="ch" style="left:33.00px;width:7.0px;transform:scaleX(1)">8</span><span class="ch" style="left:40.00px;width:7.0px;transform:scaleX(1)">8</span><span class="ch" style="left:47.00px;width:7.0px;transform:scaleX(1)">0</span><span class="ch" style="left:54.00px;width:7.0px;transform:scaleX(1)">4</span></div>
<div class="cell" style="left:706px;top:577px;width:63px"><span style="left:2px;transform:scaleX(0.928);transform-origin:0 0">BOLO CASEIRO</span></div>
<div class="fbtn" style="left:37px"><i></i></div>
<div class="fbtn" style="left:112px"><i></i></div>
<div class="fbtn" style="left:176px"><i></i></div>
<div class="fbtn" style="left:240px"><i></i></div>
<div class="fbtn" style="left:304px"><i></i></div>
<div class="fbtn" style="left:368px"><i></i></div>
<div class="fbtn" style="left:432px"><i></i></div>
<div class="fbtn" style="left:496px"><i></i></div>
<div class="fbtn" style="left:560px"><i></i></div>
<div class="fbtn" style="left:624px"><i></i></div>
<div class="fbtn" style="left:688px"><i></i></div>
<div class="fbtn" style="left:752px"><i></i></div>
<div class="selbox"></div><div class="fillh"></div>
<div class="menu">
<div class="micon"></div><div class="msep-v"></div><div style="position:absolute;left:25px;top:0;width:205px;height:1px;background:#fff"></div>
<div class="mtxt" style="left:33px;top:5px;color:#14145e">Cl<u>a</u>ssificar do Menor para o Maior</div>
<div class="mtxt" style="left:33px;top:27px;color:#14145e">Cla<u>s</u>sificar do Maior para o Menor</div>
<div class="mtxt" style="left:33px;top:49px;color:#14145e">Classificar p<u>o</u>r Cor</div>
<div class="marr" style="left:217px;top:50px;border-left-color:#3a4c9c"></div>
<div class="msep" style="left:32px;top:66px"></div>
<div class="mtxt dis" style="left:33px;top:73px;color:#9c9c9c"><u>L</u>impar Filtro de "Modelo"</div>
<div class="mtxt dis" style="left:33px;top:95px;color:#9c9c9c">F<u>i</u>ltrar por Cor</div>
<div class="marr" style="left:217px;top:96px;border-left-color:#a0a0a0"></div>
<div class="mtxt" style="left:33px;top:117px;color:#14145e"><u>F</u>iltros de Número</div>
<div class="marr" style="left:217px;top:118px;border-left-color:#3a4c9c"></div>
<div class="msep" style="left:32px;top:134px"></div>
<svg class="ico" style="left:3px;top:2px" width="18" height="17" viewBox="0 0 18 17">
<text x="0.7" y="7.6" font-family="Liberation Serif" font-weight="bold" font-size="9.5" fill="#2d51a6">A</text>
<text x="1.2" y="15.7" font-family="Liberation Serif" font-weight="bold" font-size="9.5" fill="#9c2e2c">Z</text>
<path d="M13.5 1 V15" stroke="#000" stroke-width="1"/><path d="M11.3 11.2 L13.5 15.8 L15.7 11.2 Z" fill="#000"/>
</svg>
<svg class="ico" style="left:3px;top:24px" width="18" height="17" viewBox="0 0 18 17">
<text x="0.7" y="7.6" font-family="Liberation Serif" font-weight="bold" font-size="9.5" fill="#9c2e2c">Z</text>
<text x="1.2" y="15.7" font-family="Liberation Serif" font-weight="bold" font-size="9.5" fill="#2d51a6">A</text>
<path d="M13.5 1 V15" stroke="#000" stroke-width="1"/><path d="M11.3 11.2 L13.5 15.8 L15.7 11.2 Z" fill="#000"/>
</svg>
<svg class="ico" style="left:4px;top:72px" width="16" height="14" viewBox="0 0 16 14">
<path d="M1 1 H11.5 L7.5 5.5 V11 L5 12.5 V5.5 Z" fill="#c4cede" stroke="#8c9cba" stroke-width="0.9"/>
<path d="M7.5 6.5 L14.5 12.5 M14 5.5 L8 12.5" stroke="#8090b0" stroke-width="1.5"/>
</svg>
<div class="lbox" style="left:32px;top:140px;width:192px;height:169px">
<div class="cb" style="left:22px;top:2px"><svg width="9" height="9" viewBox="0 0 9 9"><path d="M1.2 4.3 L3.6 6.8 L7.8 1.6" stroke="#000" stroke-width="2" fill="none"/></svg></div>
<div class="ltxt" style="left:35.5px;top:2px">(Selecionar Tudo)</div>
<div class="dh" style="left:13px;top:8px"></div>
<div class="cb" style="left:22px;top:18px"><svg width="9" height="9" viewBox="0 0 9 9"><path d="M1.2 4.3 L3.6 6.8 L7.8 1.6" stroke="#000" stroke-width="2" fill="none"/></svg></div>
<div class="ltxt" style="left:35.5px;top:18px">1</div>
<div class="dh" style="left:13px;top:24px"></div>
<div class="cb" style="left:22px;top:34px"><svg width="9" height="9" viewBox="0 0 9 9"><path d="M1.2 4.3 L3.6 6.8 L7.8 1.6" stroke="#000" stroke-width="2" fill="none"/></svg></div>
<div class="ltxt" style="left:35.5px;top:34px">6</div>
<div class="dh" style="left:13px;top:40px"></div>
<div class="cb" style="left:22px;top:50px"><svg width="9" height="9" viewBox="0 0 9 9"><path d="M1.2 4.3 L3.6 6.8 L7.8 1.6" stroke="#000" stroke-width="2" fill="none"/></svg></div>
<div class="ltxt" style="left:35.5px;top:50px">8</div>
<div class="dh" style="left:13px;top:56px"></div>
<div class="cb" style="left:22px;top:66px"><svg width="9" height="9" viewBox="0 0 9 9"><path d="M1.2 4.3 L3.6 6.8 L7.8 1.6" stroke="#000" stroke-width="2" fill="none"/></svg></div>
<div class="ltxt" style="left:35.5px;top:66px">22</div>
<div class="dh" style="left:13px;top:72px"></div>
<div class="cb" style="left:22px;top:82px"><svg width="9" height="9" viewBox="0 0 9 9"><path d="M1.2 4.3 L3.6 6.8 L7.8 1.6" stroke="#000" stroke-width="2" fill="none"/></svg></div>
<div class="ltxt" style="left:35.5px;top:82px">55</div>
<div class="dh" style="left:13px;top:88px"></div>
<div class="cb" style="left:22px;top:98px"><svg width="9" height="9" viewBox="0 0 9 9"><path d="M1.2 4.3 L3.6 6.8 L7.8 1.6" stroke="#000" stroke-width="2" fill="none"/></svg></div>
<div class="ltxt" style="left:35.5px;top:98px">57</div>
<div class="dh" style="left:13px;top:104px"></div>
<div class="cb" style="left:22px;top:114px"><svg width="9" height="9" viewBox="0 0 9 9"><path d="M1.2 4.3 L3.6 6.8 L7.8 1.6" stroke="#000" stroke-width="2" fill="none"/></svg></div>
<div class="ltxt" style="left:35.5px;top:114px">67</div>
<div class="dh" style="left:13px;top:120px"></div>
<div class="dv" style="left:12px;top:8px;height:113px"></div>
</div>
<div class="redbox" style="left:46px;top:250px"></div>
<div class="btn ok" style="left:66px;top:318px">OK</div>
<div class="btn" style="left:150px;top:318px">Cancelar</div>
<div class="mfoot" style="top:344px"><i style="left:226px;top:3px"></i><i style="left:222px;top:7px"></i><i style="left:226px;top:7px"></i></div>
</div>
</body></html>
